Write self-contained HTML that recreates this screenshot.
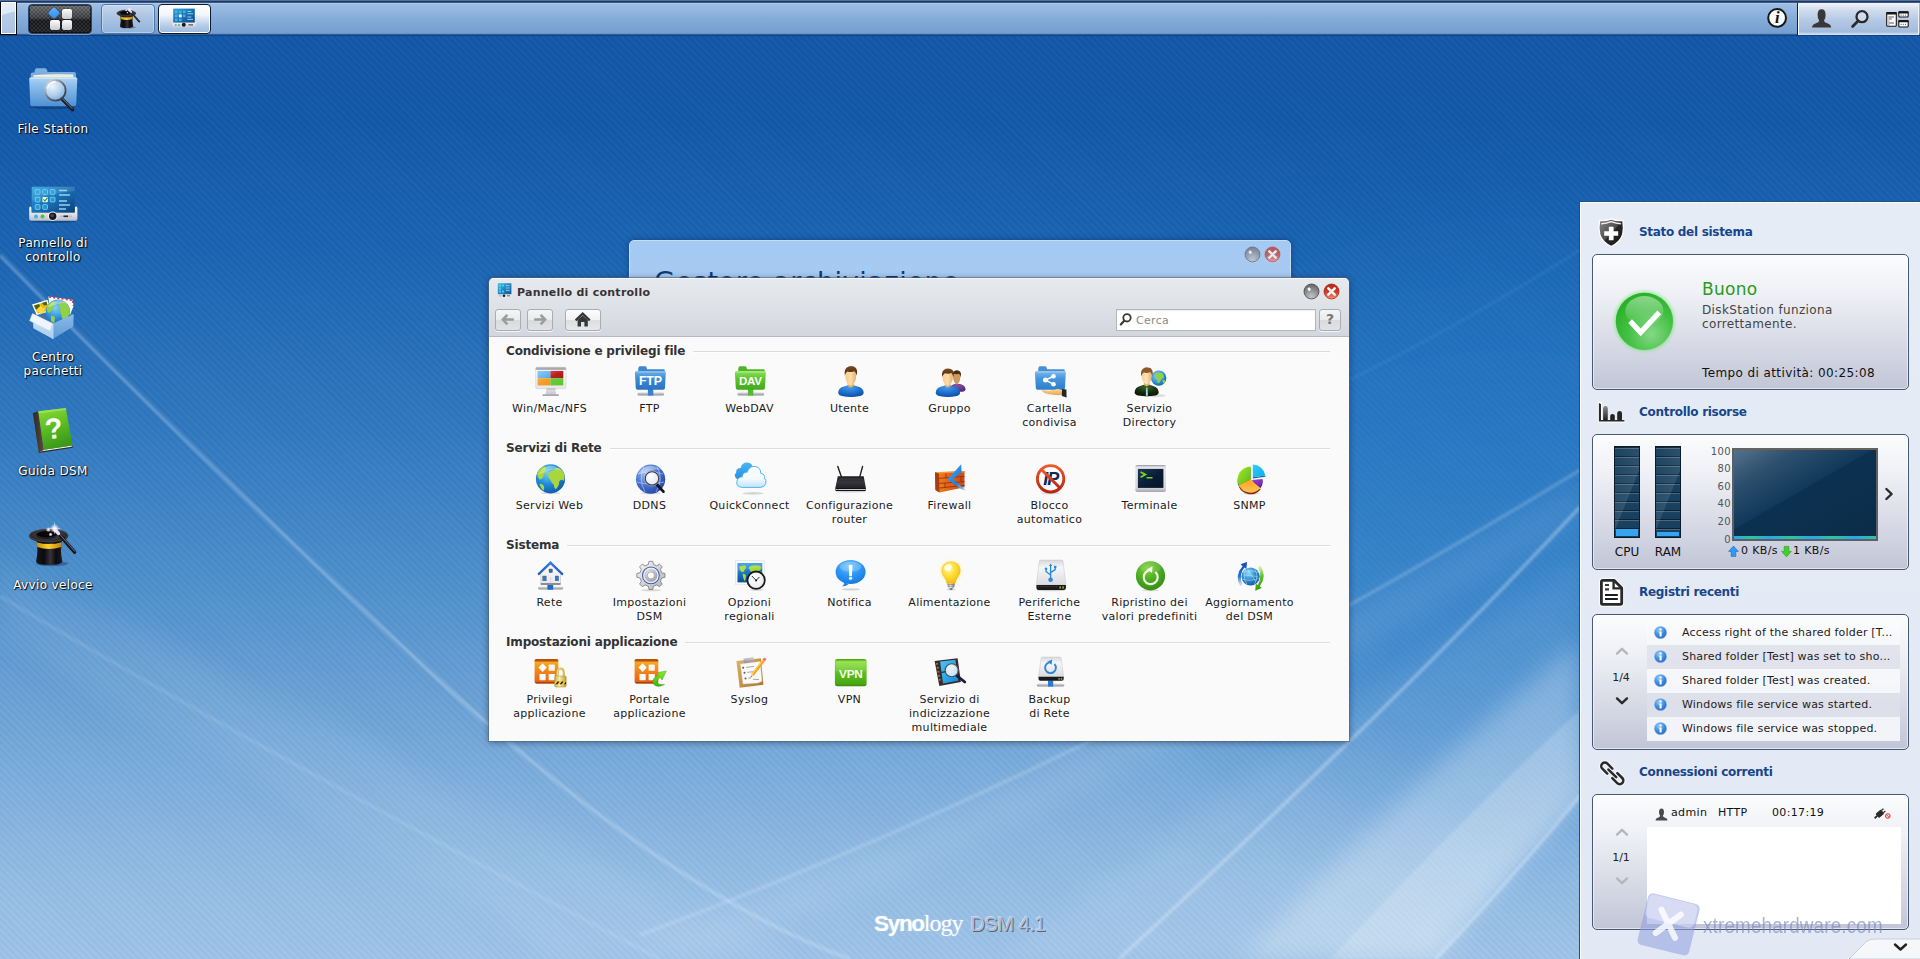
<!DOCTYPE html>
<html lang="it"><head><meta charset="utf-8"><title>Synology DiskStation</title>
<style>
*{box-sizing:border-box;margin:0;padding:0}
html,body{width:1920px;height:959px;overflow:hidden}
body{position:relative;font-family:"DejaVu Sans","Liberation Sans",sans-serif;font-size:11px;color:#222;
 background:#1257a5}
.ic{display:block;overflow:visible}
#bg{position:absolute;left:0;top:0;width:1920px;height:959px;
 background:
  repeating-linear-gradient(45deg,rgba(255,255,255,.02) 0,rgba(255,255,255,.02) 2.5px,rgba(0,0,30,.022) 2.5px,rgba(0,0,30,.022) 5px),
  linear-gradient(180deg,#1257a7 0,#1259a9 120px,#1c65b3 260px,#3079c0 430px,#4e90cc 580px,#74a8d9 740px,#94bde5 880px,#9fc4e8 959px)}
#bg svg{position:absolute;left:0;top:0}
/* ---------- taskbar ---------- */
#tb{position:absolute;left:0;top:0;width:1920px;height:36px;
 background:linear-gradient(180deg,#7f9cc4 0,#1c3763 1.2px,#1f3d6d 2.4px,#c3d8ef 3px,#9dbfe6 4px,#86acd9 18px,#759fd0 33px,#5c86bc 34px,#0d3a77 35px,#0f4a95 36px)}
#tb .sd{position:absolute;left:0;top:2px;width:17px;height:33px;border:1px solid #06080c;border-top:0;background:#fff;padding:1px}
#tb .sd i{display:block;width:100%;height:100%;background:linear-gradient(165deg,#e8eef8 0,#dfe8f5 35%,#b9cde8 36%,#a9c2e2 100%)}
.tbtn{position:absolute;top:4px;height:30px;border-radius:4px}
#mm{left:28px;width:64px;border:1px solid #2b4468;
 background:
 repeating-conic-gradient(rgba(255,255,255,.10) 0 25%,rgba(0,0,0,.10) 0 50%) 0 0/4px 4px,
 linear-gradient(180deg,#6a6c70 0,#3c3e42 45%,#16171a 55%,#1d1e21 100%);
 box-shadow:inset 0 0 0 1px rgba(0,0,0,.55),0 1px 0 rgba(255,255,255,.35)}
#mm b{position:absolute;width:10px;height:10px;border-radius:2px;background:linear-gradient(180deg,#fdfdfd,#c9cbce);box-shadow:0 0 1px #000}
#t1{left:101px;width:54px;border:1px solid #4f76ab;background:linear-gradient(180deg,#c3d5ec 0,#a8c2e2 50%,#93b3da 100%);box-shadow:inset 0 0 0 1px rgba(255,255,255,.35)}
#t2{left:157.5px;width:53.5px;border:1px solid #0c1a33;background:linear-gradient(180deg,#ffffff 0,#f2f6fb 35%,#b4cae6 75%,#9dbadf 100%);box-shadow:inset 0 0 0 1px #fff}
#tray{position:absolute;left:1797px;top:3px;width:122px;height:32px;border-left:1px solid #10213f;
 background:linear-gradient(180deg,#f3f6fb 0,#d3deee 20%,#b4c8e4 55%,#a2bbdc 90%,#dfe8f4 100%);box-shadow:inset 1px 0 0 #f4f7fc,inset -1px 0 0 #eef3fa}
#tb .ti{position:absolute}
/* ---------- desktop icons ---------- */
.dk{position:absolute;left:2px;width:100px;text-align:center}
.dk .ic{margin:0 auto}
.dl{position:relative;left:1px;margin-top:9px;font-size:12px;line-height:14px;color:#fff;letter-spacing:.35px;text-shadow:1px 1px 1px #000,0 0 2px rgba(0,0,0,.7)}
/* ---------- windows ---------- */
#w0{position:absolute;left:629px;top:240px;width:662px;height:60px;border-radius:5px 5px 0 0;background:linear-gradient(180deg,#a4c9f3,#a9cbf1);border:1px solid #c4dcf6;box-shadow:0 0 6px rgba(0,0,40,.35)}
#w0 .tt{position:absolute;left:24px;top:25px;font-size:27px;color:#0e3a78;white-space:nowrap;letter-spacing:.6px}
#w1{position:absolute;left:489px;top:278px;width:860px;height:463px;border-radius:5px 5px 0 0;background:#fafafa;box-shadow:0 0 0 1px rgba(90,100,115,.55),0 1px 7px rgba(0,0,30,.45);overflow:hidden}
#w1 .hd{position:absolute;left:0;top:0;width:860px;height:59px;background:linear-gradient(180deg,#e6e9ed 0,#dfe3e8 45%,#d3d7dd 100%);border-bottom:1px solid #b5b9c0;box-shadow:inset 0 1px 0 #f4f5f7}
#w1 .ttl{position:absolute;left:28px;top:8px;font-weight:bold;font-size:11px;line-height:14px;color:#3a3236;letter-spacing:.25px;white-space:nowrap}
.wb{position:absolute;width:17px;height:17px;border-radius:50%}
.nb{position:absolute;top:31px;height:22px;overflow:hidden;border:1px solid #a9adb4;border-radius:3px;background:linear-gradient(180deg,#fdfdfd 0,#f0f1f3 50%,#dcdee2 52%,#e6e8eb 100%);box-shadow:0 1px 0 rgba(255,255,255,.7)}
.nb.dis{background:linear-gradient(180deg,#f4f5f6 0,#e9ebed 50%,#d9dbdf 52%,#e0e2e5 100%)}
#sb{position:absolute;left:627px;top:31px;width:200px;height:22px;border:1px solid #b3b7be;background:#fff;box-shadow:inset 0 1px 1px rgba(0,0,0,.08)}
#sb span{position:absolute;left:19px;top:4px;font-size:11px;line-height:14px;color:#8a8a8a;letter-spacing:.3px}
#ct{position:absolute;left:0;top:59px;width:860px;height:404px}
.sec{position:absolute;left:17px;width:824px;height:16px;white-space:nowrap;display:flex;align-items:center}
.sec span{font-weight:bold;font-size:12px;line-height:16px;color:#333;letter-spacing:-.17px}
.sec i{flex:1;height:1px;background:#dcdcdc;margin-left:8px;margin-top:1px;box-shadow:0 1px 0 #fff}
.it{position:absolute;width:100px;text-align:center}
.it .ic{margin:0 auto}
.lb{margin-top:5px;font-size:11px;line-height:14px;color:#1a1a1a;letter-spacing:.3px;white-space:nowrap}
/* ---------- widget panel ---------- */
#wp{position:absolute;left:1579px;top:201px;width:341px;height:758px;border-left:1px solid #1d4f8e;border-top:1px solid #1d4f8e;
 background:linear-gradient(180deg,#e6ecf6 0,#e3e9f4 100%);box-shadow:inset 1px 1px 0 #fbfcfe}
.wh{position:absolute;left:59px;margin-top:.5px;font-weight:bold;font-size:12px;line-height:16px;color:#17468b;letter-spacing:-.3px;white-space:nowrap}
.wx{position:absolute;left:12px;width:317px;height:136px;border:1px solid #465872;border-radius:5px;
 background:linear-gradient(180deg,#fbfcfd 0,#eef0f5 30%,#d5d8e4 70%,#c2c5d6 100%);box-shadow:inset 0 0 0 1px rgba(255,255,255,.55)}
.wx .t{position:absolute;white-space:nowrap}
.row{position:absolute;left:54px;width:253px;height:24px}
.row span{position:absolute;left:35px;top:5px;line-height:14px;font-size:11px;letter-spacing:.2px;color:#1c1c1c;white-space:nowrap}
.pg{position:absolute;left:8px;width:40px;text-align:center;font-size:11px;line-height:14px;color:#222}
#logo{position:absolute;left:874px;top:909px;white-space:nowrap;line-height:28px}
.bar{position:absolute;top:11px;width:26px;height:92px;border:1px solid #0a1c2c;
 background:
  linear-gradient(112deg,rgba(255,255,255,.0) 0,rgba(255,255,255,.10) 55%,rgba(255,255,255,0) 56%),
  repeating-linear-gradient(180deg,#0b2236 0,#0b2236 1px,#4a6780 1px,#4a6780 2px,#1b4260 2px,#17405e 9px)}
.bar u{position:absolute;left:1px;right:1px;bottom:1px;background:#35a5f2;display:block}
.yl{position:absolute;left:110px;width:28px;text-align:right;font-size:10px;line-height:12px;color:#555;letter-spacing:.4px}
#gr{position:absolute;left:139px;top:13px;width:146px;height:93px;border:2px solid #5c6066;border-top-color:#6a6258;background:linear-gradient(150deg,#54728c 0,#2c4f6d 22%,#12395a 46%,#0c3150 47%,#0a2c48 100%)}
#gr i{position:absolute;left:0;right:0;bottom:0;height:3px;background:linear-gradient(90deg,#2aa6e8,#2fc39a 12%,#2aa6e8 25%,#2fc39a 40%,#2aa6e8 55%,#2fc39a 70%,#2aa6e8 85%,#2fc39a)}
.row .ic{position:absolute;left:7px;top:5px}
#wm{position:absolute;left:1634px;top:886px;width:260px;height:70px}
#wm .wt{position:absolute;left:69px;top:25px;font-family:"Liberation Sans",sans-serif;font-size:22px;line-height:30px;letter-spacing:.2px;color:rgba(120,132,190,.62);white-space:nowrap;transform:scaleX(.855);transform-origin:0 0}
#logo .s1{font-family:"Liberation Sans",sans-serif;font-weight:bold;font-size:22.5px;color:#fff;letter-spacing:-1.3px;text-shadow:0 0 2px rgba(255,255,255,.4)}
#logo .s2{font-family:"Liberation Serif",serif;font-size:24px;color:#fff;letter-spacing:-1px;text-shadow:0 0 2px rgba(255,255,255,.4)}
#logo .s3{font-family:"Liberation Sans",sans-serif;font-size:20px;color:#b2bdd0;margin-left:8px;letter-spacing:-.4px;text-shadow:1px 1px 0 rgba(70,84,110,.85),-1px -1px 0 rgba(255,255,255,.45)}

</style></head>
<body>
<div id="bg">
<svg width="1920" height="959" viewBox="0 0 1920 959">
<defs>
<filter id="bl1" filterUnits="userSpaceOnUse" x="-200" y="-200" width="2400" height="1400"><feGaussianBlur stdDeviation="1.5"/></filter>
<filter id="bl2" filterUnits="userSpaceOnUse" x="-200" y="-200" width="2400" height="1400"><feGaussianBlur stdDeviation="12"/></filter>
<filter id="bl3" filterUnits="userSpaceOnUse" x="-400" y="-400" width="2800" height="1800"><feGaussianBlur stdDeviation="70"/></filter>
</defs>
<!-- broad tints -->
<ellipse cx="1500" cy="540" rx="330" ry="260" fill="#1b76c8" opacity=".4" filter="url(#bl3)"/>
<!-- broad beams -->
<path d="M1240 959 Q1400 790 1580 640 L1580 800 Q1500 880 1436 959Z" fill="#fff" opacity=".3" filter="url(#bl2)"/><path d="M1330 959 Q1460 820 1580 710 L1580 796 Q1500 880 1436 959Z" fill="#fff" opacity=".16" filter="url(#bl1)"/>
<path d="M1000 959 Q1300 730 1580 560 L1580 640 Q1400 790 1240 959Z" fill="#fff" opacity=".07" filter="url(#bl2)"/>
<path d="M640 940 Q1100 770 1580 480 L1580 520 Q1100 810 700 959Z" fill="#fff" opacity=".08" filter="url(#bl2)"/>
<path d="M0 560 Q400 760 800 959 L560 959 Q300 800 0 640Z" fill="#fff" opacity=".06" filter="url(#bl2)"/>
<!-- thin lines -->
<path d="M0 255 Q190 450 430 672 T850 959" fill="none" stroke="#d4e6fa" stroke-width="2.400" opacity=".5" filter="url(#bl1)"/>
<path d="M0 596 Q240 740 660 959" fill="none" stroke="#e0eefc" stroke-width="2" opacity=".25" filter="url(#bl1)"/>
<path d="M640 935 Q1100 765 1580 470" fill="none" stroke="#e6f1fd" stroke-width="2.400" opacity=".3" filter="url(#bl1)"/>
<path d="M1350 380 Q1470 320 1580 250" fill="none" stroke="#cfe2f8" stroke-width="1.600" opacity=".13" filter="url(#bl1)"/>
<path d="M1119 959 Q1400 700 1580 507" fill="none" stroke="#eaf3fe" stroke-width="3" opacity=".42" filter="url(#bl1)"/>
<path d="M1436 959 Q1510 880 1580 796" fill="none" stroke="#eef5fe" stroke-width="3" opacity=".45" filter="url(#bl1)"/>
</svg>
</div>

<!-- taskbar -->
<div id="tb">
 <div class="sd"><i></i></div>
 <div id="mm" class="tbtn">
  <b style="left:20px;top:3px;transform:rotate(45deg) scale(.86);background:linear-gradient(135deg,#5db2ff,#2f8cf0);border-radius:1.5px"></b>
  <b style="left:33px;top:3.5px"></b><b style="left:21px;top:15px"></b><b style="left:33px;top:15px"></b>
 </div>
 <div id="t1" class="tbtn"><div style="position:absolute;left:13.5px;top:.8px"><svg class="ic" width="24" height="24" viewBox="0 0 24 24" style=""><defs>
<linearGradient id="wizard24_c" x1="0" y1="0" x2="1" y2="0"><stop offset="0" stop-color="#1a1a1c"/><stop offset=".3" stop-color="#0a0a0c"/><stop offset=".55" stop-color="#34343a"/><stop offset=".75" stop-color="#0c0c0e"/><stop offset="1" stop-color="#1c1c20"/></linearGradient>
<linearGradient id="wizard24_y" x1="0" y1="0" x2="1" y2="0"><stop offset="0" stop-color="#c98a08"/><stop offset=".45" stop-color="#ffcf2e"/><stop offset="1" stop-color="#c58306"/></linearGradient>
<radialGradient id="wizard24_b" cx=".5" cy=".4" r=".6"><stop offset="0" stop-color="#55555c"/><stop offset="1" stop-color="#1d1d21"/></radialGradient>
<radialGradient id="wizard24_sp" cx=".5" cy=".5" r=".5"><stop offset="0" stop-color="#fff"/><stop offset=".4" stop-color="#f0e4ff" stop-opacity=".8"/><stop offset="1" stop-color="#fff" stop-opacity="0"/></radialGradient>
</defs><g transform="scale(.5)">
<ellipse cx="24" cy="42.6" rx="16" ry="2.6" fill="#06204a" opacity=".35"/>
<path d="M8.4 19 Q10.6 30 8 40.5 Q8.6 44 21.2 44 Q33.8 44 34.4 40.5 Q31.8 30 34 19Z" fill="url(#wizard24_c)"/>
<path d="M8.6 21.2 Q21 25 33.8 21.2 L33.2 26 Q21 30 9.3 26Z" fill="url(#wizard24_y)"/>
<ellipse cx="20.7" cy="14.7" rx="19.6" ry="7" fill="url(#wizard24_b)"/>
<ellipse cx="20.7" cy="14.2" rx="19.2" ry="6.4" fill="none" stroke="#6a6a72" stroke-width=".6" opacity=".7"/>
<ellipse cx="18.6" cy="14" rx="10.5" ry="3.9" fill="#050506"/>
<path d="M8.5 14.6 Q18 19.5 29 14.6" fill="none" stroke="#3a3a40" stroke-width=".7"/>
<path d="M28.4 10.4 L46.6 31.2" stroke="#15151a" stroke-width="3.4" stroke-linecap="round"/>
<path d="M29.6 10.8 L46.8 30.4" stroke="#7a7a86" stroke-width=".9" stroke-linecap="round"/>
<path d="M26.4 8 L30.4 12.4" stroke="#e8dcff" stroke-width="3.6" stroke-linecap="round"/>
<circle cx="26.6" cy="7.4" r="4.6" fill="url(#wizard24_sp)"/>
<circle cx="20.4" cy="8.6" r="2.6" fill="url(#wizard24_sp)"/><circle cx="22.6" cy="13.4" r="2.2" fill="url(#wizard24_sp)"/>
<path d="M26.6 1.6v11.6M20.8 7.4h11.6" stroke="#fff" stroke-width=".6" opacity=".8"/>
</g></svg></div></div>
 <div id="t2" class="tbtn"><div style="position:absolute;left:13.6px;top:3px"><svg class="ic" width="24" height="24" viewBox="0 0 24 24" style=""><defs>
<linearGradient id="cp24_s" x1="0" y1="0" x2="1" y2="1"><stop offset="0" stop-color="#2fa3de"/><stop offset=".5" stop-color="#1a6fb5"/><stop offset="1" stop-color="#0d4f8a"/></linearGradient>
<linearGradient id="cp24_b" x1="0" y1="0" x2="0" y2="1"><stop offset="0" stop-color="#fafafc"/><stop offset="1" stop-color="#c4c6d0"/></linearGradient>
</defs>
<path d="M.4 14 H23.600 V18.400 Q23.600 19.600 22.400 19.600 H1.600 Q.4 19.600 .4 18.400Z" fill="url(#cp24_b)"/>
<rect x="1.200" y=".6" width="21.600" height="14" fill="url(#cp24_s)"/>
<g fill="#4cc4f0" opacity=".75"><rect x="3" y="2.600" width="2.600" height="2.600"/><rect x="7" y="2.600" width="2.600" height="2.600"/><rect x="11" y="2.600" width="2.600" height="2.600"/><rect x="3" y="6.600" width="2.600" height="2.600"/><rect x="11" y="6.600" width="2.600" height="2.600"/><rect x="3" y="10.600" width="2.600" height="2.600"/><rect x="7" y="10.600" width="2.600" height="2.600"/></g>
<rect x="6.800" y="6.400" width="3" height="3" fill="#f4fbf4"/>
<g stroke="#a6dcf4" stroke-width=".9"><path d="M15.400 3.400h4M15.400 5.800h5.600M15.400 9h4M15.400 11.400h5.600"/></g>
<circle cx="3.800" cy="16.900" r="1" fill="#3bb4ec"/><circle cx="7" cy="16.900" r="1" fill="#4dc041"/>
<circle cx="11.800" cy="16.700" r="2" fill="#1a1a1e"/>
<path d="M16.400 16.900h4.600" stroke="#33333a" stroke-width="1"/>
</svg></div></div>
 <div class="ti" style="left:1765px;top:6px"><svg class="ic" width="24" height="24" viewBox="0 0 24 24" style=""><circle cx="12.100" cy="11.900" r="8.900" fill="#fbfbfb" stroke="#161616" stroke-width="2"/>
<text x="12.300" y="17.400" text-anchor="middle" font-family="Liberation Serif, serif" font-weight="bold" font-style="italic" font-size="16.500" fill="#111">i</text>
</svg></div>
 <div id="tray"></div>
 <div class="ti" style="left:1809px;top:6px"><svg class="ic" width="24" height="24" viewBox="0 0 24 24" style=""><path d="M3 21.500 Q3.400 18.200 7 17.200 Q10 16.400 10.200 14.400 Q8.400 12 8.600 8.400 Q8.800 3.200 12.600 3.200 Q16.400 3.200 16.600 8.400 Q16.800 12 15 14.400 Q15.200 16.400 18.200 17.200 Q21.800 18.200 22.200 21.500Z" fill="#383838"/>
</svg></div>
 <div class="ti" style="left:1848px;top:6px"><svg class="ic" width="24" height="24" viewBox="0 0 24 24" style=""><circle cx="14" cy="10.700" r="5.500" fill="#dce6f4" fill-opacity=".55" stroke="#2a2a2a" stroke-width="2.300"/>
<path d="M10 15 L4.600 20.400" stroke="#2a2a2a" stroke-width="2.800" stroke-linecap="round"/>
</svg></div>
 <div class="ti" style="left:1885px;top:6px"><svg class="ic" width="24" height="24" viewBox="0 0 24 24" style=""><rect x="1.700" y="6.600" width="9.600" height="13.600" rx="1" fill="#fdfdfd" stroke="#161616" stroke-width="1.100"/>
<rect x="1.200" y="6.100" width="10.600" height="2.400" rx="1" fill="#161616"/>
<path d="M3.400 11h5.600M3.400 13h3.400M3.400 15.200h.9M3.400 17h5.600M3.400 18.800h.9" stroke="#333" stroke-width=".8"/>
<rect x="13.800" y="5.700" width="9.400" height="5.300" rx="1" fill="#fdfdfd" stroke="#161616" stroke-width="1.100"/>
<rect x="13.300" y="5.200" width="10.400" height="2.200" rx="1" fill="#161616"/>
<path d="M15.600 9.200h1M17.800 9.200h1M20 9.200h1" stroke="#333" stroke-width=".8"/>
<rect x="13.800" y="14.500" width="9.400" height="6.500" rx="1" fill="#fdfdfd" stroke="#161616" stroke-width="1.100"/>
<rect x="13.300" y="14" width="10.400" height="2.200" rx="1" fill="#161616"/>
<path d="M15.600 18.400h1M17.800 18.400h1M20 18.400h1" stroke="#333" stroke-width=".8"/>
</svg></div>
</div>

<!-- desktop icons -->
<div class="dk" style="top:65px"><svg class="ic" width="48" height="48" viewBox="0 0 48 48" style=""><defs>
<linearGradient id="filestation_f" x1="0" y1="0" x2="0" y2="1"><stop offset="0" stop-color="#b3d6f3"/><stop offset=".25" stop-color="#8fc1ec"/><stop offset="1" stop-color="#4f90d3"/></linearGradient>
<linearGradient id="filestation_b" x1="0" y1="0" x2="0" y2="1"><stop offset="0" stop-color="#7fb2e2"/><stop offset="1" stop-color="#5c98d4"/></linearGradient>
<radialGradient id="filestation_l" cx=".35" cy=".3" r=".8"><stop offset="0" stop-color="#f4f9ff" stop-opacity=".95"/><stop offset=".55" stop-color="#c4dcf2" stop-opacity=".75"/><stop offset="1" stop-color="#7fb0df" stop-opacity=".6"/></radialGradient>
<linearGradient id="filestation_r" x1="0" y1="0" x2="1" y2="1"><stop offset="0" stop-color="#f2f2f2"/><stop offset=".5" stop-color="#6b6b73"/><stop offset="1" stop-color="#2a2a33"/></linearGradient>
</defs>
<ellipse cx="25" cy="42" rx="23" ry="2" fill="#04244d" opacity=".35"/>
<path d="M6.5 7.5 Q6.5 3.2 9 3.2 L17 3.2 Q18.6 3.2 19 5 L19.6 7 L46 7 Q48 7 48 9 L48 38 L2.8 38 L2.8 9 Q2.8 7.5 4.5 7.5Z" fill="url(#filestation_b)"/>
<path d="M5.5 10.2 Q25 8.6 45 9.6 L46 14 L5 14Z" fill="#fbf8e4"/>
<path d="M5.8 11.6 Q25 10.2 45.4 11.2" fill="none" stroke="#d9d5b8" stroke-width=".6"/>
<path d="M1.2 14 Q1.2 12.2 3 12.2 L47.6 12.2 Q49.4 12.2 49.3 14 L48.2 39.5 Q48.1 41.3 46.3 41.3 L4.2 41.3 Q2.4 41.3 2.3 39.5Z" fill="url(#filestation_f)"/>
<path d="M1.8 13.4 L48.8 13.4" stroke="#d6eafa" stroke-width=".9" opacity=".9"/>
<path d="M33.6 33.6 L44.6 44.8" stroke="#1b1b22" stroke-width="3.4" stroke-linecap="round"/>
<path d="M34 33.2 L44 43.4" stroke="#8a8a96" stroke-width=".9" stroke-linecap="round"/>
<circle cx="27.4" cy="25.4" r="10.2" fill="url(#filestation_l)"/>
<circle cx="27.4" cy="25.4" r="10.2" fill="none" stroke="url(#filestation_r)" stroke-width="1.7"/>
<path d="M19.5 23 Q21 17.5 27 16.6" fill="none" stroke="#fff" stroke-width="1.6" stroke-linecap="round" opacity=".85"/>
</svg><div class="dl">File Station</div></div>
<div class="dk" style="top:179px"><svg class="ic" width="48" height="48" viewBox="0 0 48 48" style=""><defs>
<linearGradient id="controlpanel_s" x1="0" y1="0" x2="1" y2="1"><stop offset="0" stop-color="#2fa3de"/><stop offset=".5" stop-color="#1a6fb5"/><stop offset="1" stop-color="#0d3f7a"/></linearGradient>
<linearGradient id="controlpanel_b" x1="0" y1="0" x2="0" y2="1"><stop offset="0" stop-color="#fafafc"/><stop offset=".6" stop-color="#dcdde4"/><stop offset="1" stop-color="#b9bbc6"/></linearGradient>
</defs>
<ellipse cx="25" cy="42.3" rx="23" ry="1.6" fill="#04244d" opacity=".35"/>
<path d="M1.2 29.5 Q1.2 27.6 2.4 27.6 Q3.6 27.6 3.6 29.5 L3.6 33 L46.8 33 L46.8 29.5 Q46.8 27.6 48 27.6 Q49.4 27.6 49.4 29.5 L49.4 39.8 Q49.4 41.8 47.4 41.8 L3.2 41.8 Q1.2 41.8 1.2 39.8Z" fill="url(#controlpanel_b)"/>
<rect x="3.7" y="7.7" width="43" height="26" fill="url(#controlpanel_s)"/>
<path d="M3.7 7.7 H46.7 V12 Q25 14 3.7 22Z" fill="#fff" opacity=".10"/>
<g fill="#35b4e6" fill-opacity=".55" stroke="#7fd8f5" stroke-width=".8">
<rect x="7.2" y="10.6" width="4.8" height="4.8" rx=".8"/><rect x="14.7" y="10.6" width="4.8" height="4.8" rx=".8"/><rect x="22.2" y="10.6" width="4.8" height="4.8" rx=".8"/>
<rect x="7.2" y="18.2" width="4.8" height="4.8" rx=".8"/><rect x="22.2" y="18.2" width="4.8" height="4.8" rx=".8"/>
<rect x="7.2" y="25.6" width="4.8" height="4.8" rx=".8"/><rect x="14.7" y="25.6" width="4.8" height="4.8" rx=".8"/>
</g>
<rect x="14.4" y="17.9" width="5.4" height="5.4" rx="1" fill="#f4fbf4"/>
<path d="M15.4 20.4 l1.5 1.7 l2.4-3.2" fill="none" stroke="#2b9a3a" stroke-width="1.2"/>
<g stroke="#a6dcf4" stroke-width="1.3" opacity=".9"><path d="M31 11.5h8M31 16h11M31 22h8M31 26h11M31 30h7"/></g>
<circle cx="8" cy="37.6" r="2" fill="#3bb4ec"/><circle cx="14.5" cy="37.6" r="2" fill="#4dc041"/>
<circle cx="24.7" cy="37.2" r="4.6" fill="#f4f4f7"/>
<circle cx="24.7" cy="37.2" r="3.7" fill="#1a1a1e"/><circle cx="24.2" cy="36.6" r="1.6" fill="#4a4a52"/>
<path d="M32 37.3h12" stroke="#b9bbc4" stroke-width="1.4"/><path d="M35.5 37.3h4.5" stroke="#26262c" stroke-width="1.6"/>
</svg><div class="dl">Pannello di<br>controllo</div></div>
<div class="dk" style="top:293px"><svg class="ic" width="48" height="48" viewBox="0 0 48 48" style=""><defs>
<radialGradient id="package_g" cx=".4" cy=".35" r=".75"><stop offset="0" stop-color="#7fd0f4"/><stop offset=".6" stop-color="#2b8bd8"/><stop offset="1" stop-color="#145aa6"/></radialGradient>
<linearGradient id="package_l" x1="0" y1="0" x2="0" y2="1"><stop offset="0" stop-color="#cfe4f7"/><stop offset="1" stop-color="#a9cdee"/></linearGradient>
<linearGradient id="package_r" x1="0" y1="0" x2="0" y2="1"><stop offset="0" stop-color="#8bbbe8"/><stop offset="1" stop-color="#5f9ad6"/></linearGradient>
<clipPath id="package_c"><circle cx="29.9" cy="18.5" r="12"/></clipPath>
</defs>
<path d="M5 21 L25 12 L45.7 21 L25 30.6Z" fill="#3c73b0"/>
<path d="M20.3 3.5 L44.5 6.8 L45.6 13 L42 22 L22 17Z" fill="#fbfbfd"/>
<path d="M21 4 L44 7.2" stroke="#d8323c" stroke-width="1.6" stroke-dasharray="2 2.2"/>
<path d="M44.6 8 L45.4 13" stroke="#d8323c" stroke-width="1.4" stroke-dasharray="2 2"/>
<path d="M4 11.4 L19.5 6.8 L22.5 18 L8.7 22Z" fill="#fdfdfd"/>
<path d="M5.6 12.4 L18.6 8.4 L21 17.4 L9.6 20.6Z" fill="#f5b414"/>
<path d="M6 12.6 L11 11 L12.5 14 L8 16.5Z M14 10 L18.4 8.6 L19.4 12 L16 12.4Z" fill="#3d6a1e"/>
<path d="M10 15 l3-2.5 l1.2 2.8 l3-.6 l-1.2 3 l2 1.6 l-4 .6 l-1.4 1.6 l-1-2.6 l-3-.4z" fill="#ffd83c"/>
<circle cx="29.9" cy="18.5" r="12" fill="url(#package_g)"/>
<g clip-path="url(#package_c)" fill="#8fd14a">
<path d="M19 12 Q22 8 27 8.5 Q28 11 25.5 13 Q26 16 23 18 Q21 21 19.5 19 Q18 15 19 12Z"/>
<path d="M31 10 Q36 7.5 40 11 Q43 15 42 20 Q40 25 36 26.5 Q33 26 33.5 22 Q31 19 32.5 16 Q30 13 31 10Z"/>
<path d="M23 23 Q26 22 27 25 Q27 29 25 31 Q22 28 23 23Z"/>
</g>
<path d="M19.5 14 Q24 7.5 31 7 Q36 7 39.5 10.5 Q33 9 27 12 Q22 14.5 19.5 14Z" fill="#fff" opacity=".35"/>
<path d="M4.9 21 L24.9 30.6 L24.9 46 L5.3 35.2Z" fill="url(#package_l)"/>
<path d="M24.9 30.6 L45.7 21 L45.3 33.5 L24.9 46Z" fill="url(#package_r)"/>
<path d="M1.6 27.7 L4.5 20.6 L24.4 30.6 L22 37.7Z" fill="#eef5fc"/>
<path d="M1.6 27.7 L4.5 20.6 L24.4 30.6 L22 37.7Z" fill="none" stroke="#cfe0f2" stroke-width=".5"/>
<path d="M24.9 30.6 L24.9 46" stroke="#e4f0fb" stroke-width=".7"/>
</svg><div class="dl">Centro<br>pacchetti</div></div>
<div class="dk" style="top:407px"><svg class="ic" width="48" height="48" viewBox="0 0 48 48" style=""><defs>
<linearGradient id="help_g" x1="0" y1="0" x2=".3" y2="1"><stop offset="0" stop-color="#8fdc3a"/><stop offset=".5" stop-color="#5cbf24"/><stop offset="1" stop-color="#3b9a18"/></linearGradient>
<linearGradient id="help_s" x1="0" y1="0" x2="1" y2="0"><stop offset="0" stop-color="#2e2622"/><stop offset="1" stop-color="#5e4a40"/></linearGradient>
</defs>
<path d="M10.9 46 L44.6 40.8 L44.3 38.6 L10.7 44Z" fill="#2a2a26"/>
<path d="M10.7 44.7 L43.9 39.7 L43.7 38.4 L15.7 42.7Z" fill="#eef0ea"/>
<path d="M4.9 6 L10.3 4.3 L15.9 42.9 L10.7 45.2Z" fill="url(#help_s)"/>
<path d="M10.3 4.3 L37.8 1 L44.5 38.5 L15.7 42.7Z" fill="url(#help_g)"/>
<path d="M10.3 4.3 L37.8 1 L38.2 3 L10.7 6.5Z" fill="#b6f06a" opacity=".5"/>
<g transform="rotate(-7 26 22)"><text x="26" y="31.5" text-anchor="middle" font-family="Liberation Sans, sans-serif" font-weight="bold" font-size="29" fill="#fdfff8">?</text></g>
</svg><div class="dl">Guida DSM</div></div>
<div class="dk" style="top:521px"><svg class="ic" width="48" height="48" viewBox="0 0 48 48" style=""><defs>
<linearGradient id="wizard_c" x1="0" y1="0" x2="1" y2="0"><stop offset="0" stop-color="#1a1a1c"/><stop offset=".3" stop-color="#0a0a0c"/><stop offset=".55" stop-color="#34343a"/><stop offset=".75" stop-color="#0c0c0e"/><stop offset="1" stop-color="#1c1c20"/></linearGradient>
<linearGradient id="wizard_y" x1="0" y1="0" x2="1" y2="0"><stop offset="0" stop-color="#c98a08"/><stop offset=".45" stop-color="#ffcf2e"/><stop offset="1" stop-color="#c58306"/></linearGradient>
<radialGradient id="wizard_b" cx=".5" cy=".4" r=".6"><stop offset="0" stop-color="#55555c"/><stop offset="1" stop-color="#1d1d21"/></radialGradient>
<radialGradient id="wizard_sp" cx=".5" cy=".5" r=".5"><stop offset="0" stop-color="#fff"/><stop offset=".4" stop-color="#f0e4ff" stop-opacity=".8"/><stop offset="1" stop-color="#fff" stop-opacity="0"/></radialGradient>
</defs>
<ellipse cx="24" cy="42.6" rx="16" ry="2.6" fill="#06204a" opacity=".35"/>
<path d="M8.4 19 Q10.6 30 8 40.5 Q8.6 44 21.2 44 Q33.8 44 34.4 40.5 Q31.8 30 34 19Z" fill="url(#wizard_c)"/>
<path d="M8.6 21.2 Q21 25 33.8 21.2 L33.2 26 Q21 30 9.3 26Z" fill="url(#wizard_y)"/>
<ellipse cx="20.7" cy="14.7" rx="19.6" ry="7" fill="url(#wizard_b)"/>
<ellipse cx="20.7" cy="14.2" rx="19.2" ry="6.4" fill="none" stroke="#6a6a72" stroke-width=".6" opacity=".7"/>
<ellipse cx="18.6" cy="14" rx="10.5" ry="3.9" fill="#050506"/>
<path d="M8.5 14.6 Q18 19.5 29 14.6" fill="none" stroke="#3a3a40" stroke-width=".7"/>
<path d="M28.4 10.4 L46.6 31.2" stroke="#15151a" stroke-width="3.4" stroke-linecap="round"/>
<path d="M29.6 10.8 L46.8 30.4" stroke="#7a7a86" stroke-width=".9" stroke-linecap="round"/>
<path d="M26.4 8 L30.4 12.4" stroke="#e8dcff" stroke-width="3.6" stroke-linecap="round"/>
<circle cx="26.6" cy="7.4" r="4.6" fill="url(#wizard_sp)"/>
<circle cx="20.4" cy="8.6" r="2.6" fill="url(#wizard_sp)"/><circle cx="22.6" cy="13.4" r="2.2" fill="url(#wizard_sp)"/>
<path d="M26.6 1.6v11.6M20.8 7.4h11.6" stroke="#fff" stroke-width=".6" opacity=".8"/>
</svg><div class="dl">Avvio veloce</div></div>


<!-- back window -->
<div id="w0">
 <div class="tt">Gestore archiviazione</div>
 <div class="wb" style="left:614px;top:5px;opacity:.7"><svg class="ic" width="17" height="17" viewBox="0 0 17 17" style=""><defs>
<radialGradient id="wmin_g" cx=".5" cy=".85" r=".9"><stop offset="0" stop-color="#c4c6c8"/><stop offset=".5" stop-color="#8e9092"/><stop offset="1" stop-color="#5c5e60"/></radialGradient>
</defs>
<circle cx="8.500" cy="9" r="7.800" fill="#fff" opacity=".7"/>
<circle cx="8.500" cy="8.500" r="7.500" fill="url(#wmin_g)" stroke="#4c4e50" stroke-width=".9"/>
<ellipse cx="6.200" cy="6.200" rx="1.500" ry="1.800" fill="#fff" transform="rotate(-30 6.200 6.200)"/>
</svg></div>
 <div class="wb" style="left:634px;top:5px;opacity:.7"><svg class="ic" width="17" height="17" viewBox="0 0 17 17" style=""><defs>
<linearGradient id="wclose_g" x1="0" y1="0" x2="0" y2="1"><stop offset="0" stop-color="#b8261a"/><stop offset=".55" stop-color="#cc3c2c"/><stop offset="1" stop-color="#f8907c"/></linearGradient>
</defs>
<circle cx="8.500" cy="9" r="7.800" fill="#fff" opacity=".7"/>
<circle cx="8.500" cy="8.500" r="7.500" fill="url(#wclose_g)" stroke="#a82216" stroke-width=".8"/>
<path d="M5.300 5.300 L11.700 11.700 M11.700 5.300 L5.300 11.700" stroke="#fff6f4" stroke-width="2.500" stroke-linecap="round"/>
</svg></div>
</div>

<!-- control panel window -->
<div id="w1">
 <div class="hd">
  <div style="position:absolute;left:8px;top:5px"><svg class="ic" width="16" height="16" viewBox="0 0 16 16" style=""><defs><linearGradient id="cp16_s" x1="0" y1="0" x2="1" y2="1"><stop offset="0" stop-color="#3cc0e8"/><stop offset=".6" stop-color="#1f7ab8"/><stop offset="1" stop-color="#145a94"/></linearGradient></defs>
<path d="M0 10.600 H15 V14 Q15 14.800 14.200 14.800 H.8 Q0 14.800 0 14Z" fill="#e4e6ec"/>
<rect x=".8" y=".2" width="13.600" height="11" fill="url(#cp16_s)"/>
<g fill="#5ad8f4" opacity=".8"><rect x="2" y="1.600" width="2" height="2"/><rect x="5" y="1.600" width="2" height="2"/><rect x="2" y="4.600" width="2" height="2"/><rect x="2" y="7.600" width="2" height="2"/><rect x="5" y="7.600" width="2" height="2"/></g>
<g stroke="#9fe0f4" stroke-width=".8"><path d="M8.800 2.600h4M8.800 5h4M8.800 7.400h4"/></g>
<circle cx="7" cy="12.800" r="1.300" fill="#1a1a1e"/><circle cx="2.200" cy="12.800" r=".6" fill="#3bb4ec"/><circle cx="4" cy="12.800" r=".6" fill="#4dc041"/>
<path d="M10 12.800h3" stroke="#44444c" stroke-width=".8"/>
</svg></div>
  <div class="ttl">Pannello di controllo</div>
  <div class="wb" style="left:814px;top:5px"><svg class="ic" width="17" height="17" viewBox="0 0 17 17" style=""><defs>
<radialGradient id="wmin_g" cx=".5" cy=".85" r=".9"><stop offset="0" stop-color="#c4c6c8"/><stop offset=".5" stop-color="#8e9092"/><stop offset="1" stop-color="#5c5e60"/></radialGradient>
</defs>
<circle cx="8.500" cy="9" r="7.800" fill="#fff" opacity=".7"/>
<circle cx="8.500" cy="8.500" r="7.500" fill="url(#wmin_g)" stroke="#4c4e50" stroke-width=".9"/>
<ellipse cx="6.200" cy="6.200" rx="1.500" ry="1.800" fill="#fff" transform="rotate(-30 6.200 6.200)"/>
</svg></div>
  <div class="wb" style="left:834px;top:5px"><svg class="ic" width="17" height="17" viewBox="0 0 17 17" style=""><defs>
<linearGradient id="wclose_g" x1="0" y1="0" x2="0" y2="1"><stop offset="0" stop-color="#b8261a"/><stop offset=".55" stop-color="#cc3c2c"/><stop offset="1" stop-color="#f8907c"/></linearGradient>
</defs>
<circle cx="8.500" cy="9" r="7.800" fill="#fff" opacity=".7"/>
<circle cx="8.500" cy="8.500" r="7.500" fill="url(#wclose_g)" stroke="#a82216" stroke-width=".8"/>
<path d="M5.300 5.300 L11.700 11.700 M11.700 5.300 L5.300 11.700" stroke="#fff6f4" stroke-width="2.500" stroke-linecap="round"/>
</svg></div>
  <div class="nb dis" style="left:6px;width:26px"><svg class="ic" width="24" height="20" viewBox="0 0 24 20" style=""><path d="M11.400 4.800 L6.800 9.600 L11.400 14.400 M7.400 9.600 H17.800" fill="none" stroke="#9a9c9e" stroke-width="2.500" stroke-linejoin="miter"/>
</svg></div>
  <div class="nb dis" style="left:38px;width:26px"><svg class="ic" width="24" height="20" viewBox="0 0 24 20" style=""><path d="M12.600 4.800 L17.200 9.600 L12.600 14.400 M16.600 9.600 H6.200" fill="none" stroke="#9a9c9e" stroke-width="2.500" stroke-linejoin="miter"/>
</svg></div>
  <div class="nb" style="left:76px;width:36px"><svg class="ic" width="34" height="20" viewBox="0 0 34 20" style=""><path d="M9.600 10.400 L16.700 3.600 L23.800 10.400" fill="none" stroke="#343638" stroke-width="2.200" stroke-linejoin="miter"/>
<path d="M11.600 10 L16.700 5.400 L21.800 10 V16.400 H18.400 V12 H15 V16.400 H11.600Z" fill="#343638"/>
</svg></div>
  <div id="sb"><svg class="ic" width="16" height="20" viewBox="0 0 16 20" style=""><circle cx="10" cy="7.800" r="3.700" fill="#fff" stroke="#3a3a3a" stroke-width="1.800"/>
<path d="M7.200 10.800 L3.800 14.400" stroke="#3a3a3a" stroke-width="2.200" stroke-linecap="round"/>
</svg><span>Cerca</span></div>
  <div class="nb dis" style="left:830px;width:22px;text-align:center;font-weight:bold;font-size:14px;line-height:19px;color:#777">?</div>
 </div>
 <div id="ct">
<div class="sec" style="top:6px"><span>Condivisione e privilegi file</span><i></i></div>
<div class="it" style="left:10.5px;top:28px"><svg class="ic" width="32" height="32" viewBox="0 0 32 32" style=""><defs>
<linearGradient id="winmac_fr" x1="0" y1="0" x2="0" y2="1"><stop offset="0" stop-color="#9c9ca2"/><stop offset=".12" stop-color="#b4b4ba"/><stop offset=".13" stop-color="#fdfdfd"/><stop offset="1" stop-color="#e6e6ea"/></linearGradient>
<linearGradient id="winmac_st" x1="0" y1="0" x2="0" y2="1"><stop offset="0" stop-color="#8a8a90"/><stop offset=".3" stop-color="#dedee2"/><stop offset="1" stop-color="#c4c4ca"/></linearGradient>
<linearGradient id="winmac_gl" x1="0" y1="0" x2="1" y2="1"><stop offset="0" stop-color="#fff" stop-opacity=".45"/><stop offset=".5" stop-color="#fff" stop-opacity=".08"/><stop offset="1" stop-color="#fff" stop-opacity="0"/></linearGradient>
</defs>
<path d="M12.4 23 L21.4 23 L22 29.6 L11.8 29.6Z" fill="url(#winmac_st)"/>
<rect x="8.4" y="29.3" width="16.6" height="1.8" rx=".8" fill="#a6a6ac"/>
<rect x="1.7" y="2.2" width="30.3" height="21.4" rx="1.2" fill="url(#winmac_fr)" stroke="#c9c9ce" stroke-width=".5"/>
<rect x="3.6" y="5.9" width="12.8" height="7.3" fill="#3aa4ea"/><rect x="16.4" y="5.9" width="12.9" height="7.3" fill="#b40c0c"/>
<rect x="3.6" y="13.2" width="12.8" height="7.2" fill="#f2940e"/><rect x="16.4" y="13.2" width="12.9" height="7.2" fill="#5cc62c"/>
<rect x="3.6" y="5.9" width="25.7" height="14.5" fill="url(#winmac_gl)"/>
</svg><div class="lb">Win/Mac/NFS</div></div>
<div class="it" style="left:110.5px;top:28px"><svg class="ic" width="32" height="32" viewBox="0 0 32 32" style=""><defs>
<linearGradient id="ftp_f" x1="0" y1="0" x2="0" y2="1"><stop offset="0" stop-color="#6fb0e6"/><stop offset=".4" stop-color="#3c8bd6"/><stop offset="1" stop-color="#2a72c0"/></linearGradient>
<linearGradient id="ftp_p" x1="0" y1="0" x2="0" y2="1"><stop offset="0" stop-color="#e8e8ec"/><stop offset=".5" stop-color="#b8b8be"/><stop offset="1" stop-color="#8e8e96"/></linearGradient>
</defs>
<rect x="3.4" y="27.3" width="26.8" height="3.2" rx="1.6" fill="url(#ftp_p)"/>
<rect x="13.9" y="24" width="5.4" height="6.6" fill="#3a80cc"/>
<path d="M4.2 5 Q4.2 1.2 6 1.2 L11 1.2 Q12.2 1.2 12.6 2.6 L13.2 4.2 L29.4 4.2 Q30.8 4.2 30.8 5.6 L30.8 9 L4.2 9Z" fill="#3f86cf"/>
<path d="M.9 8 Q.9 6 2.8 6 L30 6 Q31.9 6 31.8 8 L31 23 Q30.9 24.8 29.2 24.8 L3.6 24.8 Q1.9 24.8 1.8 23Z" fill="url(#ftp_f)"/>
<path d="M1.6 7 L31.2 7" stroke="#a9d2f4" stroke-width=".8"/>
<text x="16.4" y="20" text-anchor="middle" font-family="Liberation Sans, sans-serif" font-weight="bold" font-size="12.4" fill="#fff" letter-spacing="-.2">FTP</text>
</svg><div class="lb">FTP</div></div>
<div class="it" style="left:210.5px;top:28px"><svg class="ic" width="32" height="32" viewBox="0 0 32 32" style=""><defs>
<linearGradient id="webdav_f" x1="0" y1="0" x2="0" y2="1"><stop offset="0" stop-color="#8fe05a"/><stop offset=".4" stop-color="#5cc632"/><stop offset="1" stop-color="#43a81e"/></linearGradient>
<linearGradient id="webdav_p" x1="0" y1="0" x2="0" y2="1"><stop offset="0" stop-color="#e8e8ec"/><stop offset=".5" stop-color="#b8b8be"/><stop offset="1" stop-color="#8e8e96"/></linearGradient>
</defs>
<rect x="3.4" y="27.3" width="26.8" height="3.2" rx="1.6" fill="url(#webdav_p)"/>
<rect x="13.9" y="24" width="5.4" height="6.6" fill="#55bb2c"/>
<path d="M4.2 5 Q4.2 1.2 6 1.2 L11 1.2 Q12.2 1.2 12.6 2.6 L13.2 4.2 L29.4 4.2 Q30.8 4.2 30.8 5.6 L30.8 9 L4.2 9Z" fill="#4fb52a"/>
<path d="M.9 8 Q.9 6 2.8 6 L30 6 Q31.9 6 31.8 8 L31 23 Q30.9 24.8 29.2 24.8 L3.6 24.8 Q1.9 24.8 1.8 23Z" fill="url(#webdav_f)"/>
<path d="M1.6 7 L31.2 7" stroke="#c4f2a0" stroke-width=".8"/>
<text x="16.4" y="20" text-anchor="middle" font-family="Liberation Sans, sans-serif" font-weight="bold" font-size="11.6" fill="#fff" letter-spacing="-.2">DAV</text>
</svg><div class="lb">WebDAV</div></div>
<div class="it" style="left:310.5px;top:28px"><svg class="ic" width="32" height="32" viewBox="0 0 32 32" style=""><defs>
<radialGradient id="user_b" cx=".45" cy=".2" r=".9"><stop offset="0" stop-color="#3f9cf0"/><stop offset=".55" stop-color="#1a6cc8"/><stop offset="1" stop-color="#0d4590"/></radialGradient>
<linearGradient id="user_s" x1="0" y1="0" x2="1" y2="0"><stop offset="0" stop-color="#f7c98a"/><stop offset=".5" stop-color="#fbdcaa"/><stop offset="1" stop-color="#e8ad68"/></linearGradient>
<linearGradient id="user_h" x1="0" y1="0" x2="0" y2="1"><stop offset="0" stop-color="#7a4a22"/><stop offset="1" stop-color="#4a280e"/></linearGradient>
</defs>
<path d="M4.2 27.5 Q4.4 22.6 10 21.4 L14 20.2 L19.4 20.2 L23.6 21.4 Q29.4 22.6 29.7 27.5 Q29.6 30 26 31 Q17 33.2 8 31 Q4.3 30 4.2 27.5Z" fill="url(#user_b)"/>
<path d="M13.6 17 L13.8 21 Q16.7 24 19.8 21 L20 17Z" fill="#e8a860"/>
<path d="M11.2 9.5 Q11 3.6 16.8 3.4 Q22.4 3.6 22.3 9.5 Q22.4 14 20.6 17.4 Q18.8 20.6 16.7 20.7 Q14.6 20.6 12.8 17.4 Q11 14 11.2 9.5Z" fill="url(#user_s)"/>
<path d="M10.8 10.6 Q9.6 3.6 14.6 1.6 Q19 .2 21.6 2.8 Q24 5 22.6 10.6 Q22.2 7.6 20.4 6.2 Q17.6 7.6 13.4 6.4 Q11.4 8 10.8 10.6Z" fill="url(#user_h)"/>
</svg><div class="lb">Utente</div></div>
<div class="it" style="left:410.5px;top:28px"><svg class="ic" width="32" height="32" viewBox="0 0 32 32" style=""><defs>
<radialGradient id="group_b" cx=".45" cy=".2" r=".9"><stop offset="0" stop-color="#3f9cf0"/><stop offset=".55" stop-color="#1a6cc8"/><stop offset="1" stop-color="#0d4590"/></radialGradient>
<radialGradient id="group_p" cx=".45" cy=".2" r=".9"><stop offset="0" stop-color="#8a4fa8"/><stop offset="1" stop-color="#4a2468"/></radialGradient>
<linearGradient id="group_s" x1="0" y1="0" x2="1" y2="0"><stop offset="0" stop-color="#f7c98a"/><stop offset=".5" stop-color="#fbdcaa"/><stop offset="1" stop-color="#e8ad68"/></linearGradient>
<linearGradient id="group_h" x1="0" y1="0" x2="0" y2="1"><stop offset="0" stop-color="#7a4a22"/><stop offset="1" stop-color="#4a280e"/></linearGradient>
</defs>
<path d="M16 23 Q17 19.6 21 19 L26 19 Q31 20 31.6 24 Q31.6 26.4 28 26.8 L18 27Z" fill="url(#group_p)"/>
<path d="M18.6 11 Q18.6 6.6 22.8 6.6 Q26.6 6.8 26.4 11 Q26.4 15 25 17.4 Q23.8 19.4 22.6 19.4 Q20 19 18.6 11Z" fill="#c99a64"/>
<path d="M18.4 12 Q17.6 6.4 21.6 5.4 Q25 4.8 26.4 7 Q27.8 9 26.6 12.4 Q26.4 10 25 8.8 Q22.6 9.6 20 8.8 Q18.8 10 18.4 12Z" fill="#4a2a12"/>
<path d="M1.7 27.8 Q1.9 23 7.4 21.6 L11 20.4 L16.4 20.4 L20.4 21.6 Q25.8 23 26.1 27.8 Q26 30.2 22.6 31 Q13.8 33.2 5.2 31 Q1.8 30.2 1.7 27.8Z" fill="url(#group_b)"/>
<path d="M10.8 17 L11 21 Q13.7 24 16.6 21 L16.8 17Z" fill="#e8a860"/>
<path d="M8.6 11 Q8.4 5.4 13.8 5.2 Q19 5.4 18.9 11 Q19 15 17.4 18 Q15.6 20.8 13.7 20.9 Q11.8 20.8 10 18 Q8.4 15 8.6 11Z" fill="url(#group_s)"/>
<path d="M8.2 12 Q7 5.6 11.8 3.8 Q16 2.6 18.4 5 Q20.6 7 19.3 12 Q19 9.2 17.4 8 Q14.6 9.2 10.8 8.2 Q8.8 9.6 8.2 12Z" fill="url(#group_h)"/>
</svg><div class="lb">Gruppo</div></div>
<div class="it" style="left:510.5px;top:28px"><svg class="ic" width="32" height="32" viewBox="0 0 32 32" style=""><defs>
<linearGradient id="share_f" x1="0" y1="0" x2="0" y2="1"><stop offset="0" stop-color="#7cbaea"/><stop offset=".4" stop-color="#4696dc"/><stop offset="1" stop-color="#2f7ccb"/></linearGradient>
<linearGradient id="share_hd" x1="0" y1="0" x2="0" y2="1"><stop offset="0" stop-color="#fbd79a"/><stop offset="1" stop-color="#e9a550"/></linearGradient>
</defs>
<path d="M4.2 5 Q4.2 1.2 6 1.2 L11 1.2 Q12.2 1.2 12.6 2.6 L13.2 4.2 L29.4 4.2 Q30.8 4.2 30.8 5.6 L30.8 9 L4.2 9Z" fill="#4a8fd2"/>
<path d="M.9 8 Q.9 6 2.8 6 L30 6 Q31.9 6 31.8 8 L31 23 Q30.9 24.8 29.2 24.8 L3.6 24.8 Q1.9 24.8 1.8 23Z" fill="url(#share_f)"/>
<path d="M1.6 7 L31.2 7" stroke="#b3d8f5" stroke-width=".8"/>
<path d="M11.5 15.1 L19.5 11.3 M11.5 15.1 L19.5 19.2" stroke="#fff" stroke-width="1.5"/>
<circle cx="11.5" cy="15.1" r="2.5" fill="#fff"/><circle cx="19.5" cy="11.3" r="2.3" fill="#fff"/><circle cx="19.5" cy="19.2" r="2.3" fill="#fff"/>
<path d="M7 25.4 Q10 24.6 14 25.8 L20 25 Q24 23.2 26 24.4 Q28 25.6 28 27.6 L28 30 Q20 30.6 14 29 Q9 27.6 7 25.4Z" fill="url(#share_hd)"/>
<path d="M27.9 24 L32.4 24.6 L32.6 32.4 L27.9 31Z" fill="#1f2a22"/>
</svg><div class="lb">Cartella<br>condivisa</div></div>
<div class="it" style="left:610.5px;top:28px"><svg class="ic" width="32" height="32" viewBox="0 0 32 32" style=""><defs>
<radialGradient id="directory_g" cx=".4" cy=".35" r=".75"><stop offset="0" stop-color="#8fd8f8"/><stop offset=".6" stop-color="#2b8bd8"/><stop offset="1" stop-color="#1258a6"/></radialGradient>
<radialGradient id="directory_b" cx=".5" cy=".2" r=".9"><stop offset="0" stop-color="#3a6a2a"/><stop offset=".5" stop-color="#16300f"/><stop offset="1" stop-color="#060e04"/></radialGradient>
<linearGradient id="directory_s" x1="0" y1="0" x2="1" y2="0"><stop offset="0" stop-color="#f7cf98"/><stop offset=".5" stop-color="#fde2b8"/><stop offset="1" stop-color="#e8ad68"/></linearGradient>
<clipPath id="directory_c"><circle cx="24.7" cy="13.1" r="7.7"/></clipPath>
</defs>
<ellipse cx="20" cy="30.6" rx="12" ry="1.6" fill="#000" opacity=".12"/>
<circle cx="24.7" cy="13.1" r="7.7" fill="url(#directory_g)"/>
<g clip-path="url(#directory_c)" fill="#8fd14a"><path d="M21 9 Q24 6.5 27.6 8 Q30.4 10 29.6 13 Q27 13.6 26.4 16 Q24.8 19.4 23.4 17.4 Q23.6 14.4 21.6 13 Q20 11 21 9Z"/><path d="M28.6 15 Q31 14 31.6 16.6 Q30.6 19 29 18.6Z"/></g>
<path d="M.6 27.6 Q.8 22.4 6.2 21 L10 19.8 L15.4 19.8 L19.2 21 Q24.4 22.4 24.7 27.6 Q24.6 29.8 21.4 30.4 Q12.6 32 4 30.4 Q.7 29.8 .6 27.6Z" fill="url(#directory_b)"/>
<path d="M10 19.8 L12.8 23.4 L15.4 19.8 L14 26 L12.8 30.6 L11.4 26Z" fill="#2c5a22"/>
<path d="M12.2 22.6 L13.4 22.6 L13.9 30.8 L11.8 30.8Z" fill="#a9d4f4"/>
<path d="M9.8 16 L10 20 Q12.6 22.6 15.4 20 L15.6 16Z" fill="#e8a860"/>
<path d="M7.6 10 Q7.4 4.6 12.7 4.4 Q17.8 4.6 17.7 10 Q17.8 13.8 16.2 16.6 Q14.5 19.4 12.6 19.5 Q10.8 19.4 9 16.6 Q7.4 13.8 7.6 10Z" fill="url(#directory_s)"/>
<path d="M7.2 11.4 Q5.8 5 10.6 2.8 Q12.4 1.6 13.6 2.6 Q16.8 2.4 18.2 5 Q19.4 7.6 18.2 11 Q17.6 8.4 16 7 Q13.4 8.6 9.8 7.6 Q7.8 9.2 7.2 11.4Z" fill="#8a5a2a"/>
</svg><div class="lb">Servizio<br>Directory</div></div>
<div class="sec" style="top:103px"><span>Servizi di Rete</span><i></i></div>
<div class="it" style="left:10.5px;top:125px"><svg class="ic" width="32" height="32" viewBox="0 0 32 32" style=""><defs>
<radialGradient id="web_g" cx=".4" cy=".3" r=".8"><stop offset="0" stop-color="#6fd0f6"/><stop offset=".5" stop-color="#1f8ad8"/><stop offset="1" stop-color="#0d4f9e"/></radialGradient>
<clipPath id="web_c"><circle cx="16.5" cy="16.8" r="14.6"/></clipPath>
</defs>
<ellipse cx="16.5" cy="31" rx="10" ry="1.2" fill="#000" opacity=".12"/>
<circle cx="16.5" cy="16.8" r="14.6" fill="url(#web_g)"/>
<g clip-path="url(#web_c)" fill="#a9d63e">
<path d="M3 11 Q5 6 10 4.6 Q13 5 12 7.6 Q10.4 9 11 11 Q9 12.4 9.6 14.6 Q8 17.6 5.6 17.4 Q3.2 15 3 11Z"/>
<path d="M5.4 22 Q8 21.4 9.6 23.6 Q11 26 9.6 28.6 Q7 27 5.4 22Z"/>
<path d="M14 12 Q16 8.4 20 8 Q21 5.6 24.6 6 Q29 8 30.6 13 Q31 17 29.4 19 Q27.6 17 26 18.4 Q24.4 20 25 22 Q24 25.4 21.6 27.4 Q19.6 26 19.8 22.6 Q17.4 21 16.4 18 Q14.6 16.6 14 12Z"/>
</g>
<path d="M4.4 13 Q8 4.4 16.5 3.8 Q23 4 27 8 Q20 6.4 13 9.4 Q7.4 11.6 4.4 13Z" fill="#fff" opacity=".3"/>
</svg><div class="lb">Servizi Web</div></div>
<div class="it" style="left:110.5px;top:125px"><svg class="ic" width="32" height="32" viewBox="0 0 32 32" style=""><defs>
<radialGradient id="ddns_g" cx=".35" cy=".3" r=".85"><stop offset="0" stop-color="#a4c4f2"/><stop offset=".45" stop-color="#4a76d2"/><stop offset="1" stop-color="#1d3a9a"/></radialGradient>
<radialGradient id="ddns_l" cx=".4" cy=".35" r=".7"><stop offset="0" stop-color="#fff"/><stop offset="1" stop-color="#dfe6f2"/></radialGradient>
</defs>
<ellipse cx="16.6" cy="31.2" rx="10" ry="1.2" fill="#000" opacity=".12"/>
<circle cx="16.6" cy="17.2" r="14.6" fill="url(#ddns_g)"/>
<g fill="none" stroke="#dbe8ff" stroke-width=".7" opacity=".7"><path d="M4 12 Q16 8 29 12M3 20 Q16 24 30 20M10 4.6 Q4 17 11 30M23 4.6 Q30 17 22 30"/></g>
<path d="M4 12 Q8 4.600 16.600 3.800 Q23 4 27 8 Q20 6.400 13 9.400 Q7.400 11.600 4 12Z" fill="#fff" opacity=".35"/>
<path d="M22.400 22 L29.400 29.600" stroke="#15151a" stroke-width="2.800" stroke-linecap="round"/>
<circle cx="18" cy="16.400" r="6.800" fill="url(#ddns_l)" stroke="#3a3a44" stroke-width="1.300"/>
<circle cx="18" cy="16.400" r="7.600" fill="none" stroke="#c8c8d2" stroke-width=".5"/>
</svg><div class="lb">DDNS</div></div>
<div class="it" style="left:210.5px;top:125px"><svg class="ic" width="32" height="32" viewBox="0 0 32 32" style=""><defs>
<linearGradient id="quickconnect_w" x1="0" y1="0" x2="0" y2="1"><stop offset="0" stop-color="#ffffff"/><stop offset=".6" stop-color="#f2f9ff"/><stop offset="1" stop-color="#bfe3fb"/></linearGradient>
<linearGradient id="quickconnect_b" x1="0" y1="0" x2="0" y2="1"><stop offset="0" stop-color="#4ab4f4"/><stop offset="1" stop-color="#2a90de"/></linearGradient>
</defs>
<ellipse cx="19" cy="31.4" rx="10.5" ry="1.3" fill="#000" opacity=".14"/>
<g transform="translate(-.8 -.6)"><path d="M4 17.8 Q-.4 14.6 3 11.2 Q2.6 6.6 7.4 6.6 Q8.6 1 14 1 Q19.4 1.2 19.6 7 L20 18Z" fill="url(#quickconnect_b)"/>
<path d="M9 26 Q3.200 25.600 3.600 20.600 Q4 16 9 15.400 Q9.600 10.600 14 10.800 Q15.600 5 21 5 Q27.400 5.200 27.600 12 Q32 12.600 31.400 17 Q33.400 19 32.600 22 Q31.600 26 27 26Z" fill="url(#quickconnect_w)" stroke="#52b4f2" stroke-width="1"/></g>
</svg><div class="lb">QuickConnect</div></div>
<div class="it" style="left:310.5px;top:125px"><svg class="ic" width="32" height="32" viewBox="0 0 32 32" style=""><defs>
<linearGradient id="router_t" x1="0" y1="0" x2="0" y2="1"><stop offset="0" stop-color="#1c1c20"/><stop offset=".5" stop-color="#35353a"/><stop offset="1" stop-color="#232327"/></linearGradient>
</defs>
<ellipse cx="16.600" cy="29.400" rx="15" ry="1.200" fill="#000" opacity=".15"/>
<path d="M7.300 14.400 L3.800 4.400M25.900 14.400 L28.600 4.400" stroke="#1f1f24" stroke-width="1.400" stroke-linecap="round"/>
<path d="M3.800 14.200 L29.700 14.200 L31.900 25.900 L1.300 25.900Z" fill="url(#router_t)"/>
<path d="M5 17 L28.600 17" stroke="#4c4c54" stroke-width=".6"/>
<path d="M1.300 25.900 L31.900 25.900 L31.900 28 Q31.900 28.900 31 28.900 L2.200 28.900 Q1.300 28.900 1.300 28Z" fill="#121215"/>
<path d="M1.600 27 L31.600 27 L31.600 28 L1.600 28Z" fill="#c8c8d0"/>
<rect x="3" y="27" width="2" height="1" fill="#5aa8ee"/>
</svg><div class="lb">Configurazione<br>router</div></div>
<div class="it" style="left:410.5px;top:125px"><svg class="ic" width="32" height="32" viewBox="0 0 32 32" style=""><defs>
<linearGradient id="firewall_w" x1="0" y1="0" x2="1" y2="0"><stop offset="0" stop-color="#f28a1e"/><stop offset=".35" stop-color="#e86a18"/><stop offset="1" stop-color="#c8481a"/></linearGradient>
<linearGradient id="firewall_a" x1="0" y1="0" x2="1" y2="1"><stop offset="0" stop-color="#4ab0f6"/><stop offset=".6" stop-color="#1f7ed8"/><stop offset="1" stop-color="#8fd0fa"/></linearGradient>
</defs>
<path d="M1 10.200 L30.500 9.100 L30.500 25.200 L5.500 30.400 L1.400 28Z" fill="url(#firewall_w)"/>
<path d="M1 10.200 L5 11.600 L5.500 30.400 L1.400 28Z" fill="#a83c12"/>
<g stroke="#8a3010" stroke-width=".8" fill="none"><path d="M5 16.400 L30.500 14.400M5.200 21.400 L30.500 19.600M5.400 26 L30.500 23.400M12 11.400V16M22 10.600V15M17 16V20.600M27 14.800V19.800M11 21V25.400M22 20.200V24.400"/></g>
<path d="M1 10.200 L30.500 9.100 L30.500 10.400 L5 11.600Z" fill="#ffb050" opacity=".6"/>
<path d="M27.200 2.200 L13.400 17.500 L27 27 L32 28.400 L19 17 L27.600 10.200Z" fill="url(#firewall_a)"/>
</svg><div class="lb">Firewall</div></div>
<div class="it" style="left:510.5px;top:125px"><svg class="ic" width="32" height="32" viewBox="0 0 32 32" style=""><defs><linearGradient id="autoblock_r" x1="0" y1="0" x2="0" y2="1"><stop offset="0" stop-color="#f0582c"/><stop offset="1" stop-color="#b82410"/></linearGradient></defs>
<ellipse cx="16.600" cy="31.400" rx="9" ry="1" fill="#000" opacity=".12"/>
<circle cx="16.600" cy="16.800" r="13" fill="#fff" fill-opacity=".6"/>
<text x="16.800" y="23.400" text-anchor="middle" font-family="Liberation Sans, sans-serif" font-weight="bold" font-style="italic" font-size="18" fill="#14285a" letter-spacing="-1">IP</text>
<circle cx="16.600" cy="16.800" r="13.200" fill="none" stroke="url(#autoblock_r)" stroke-width="2.900"/>
<path d="M7.600 7.600 L25.800 25.800" stroke="url(#autoblock_r)" stroke-width="2.900"/>
</svg><div class="lb">Blocco<br>automatico</div></div>
<div class="it" style="left:610.5px;top:125px"><svg class="ic" width="32" height="32" viewBox="0 0 32 32" style=""><defs>
<linearGradient id="terminal_f" x1="0" y1="0" x2="0" y2="1"><stop offset="0" stop-color="#8e8e94"/><stop offset=".08" stop-color="#e6e6ea"/><stop offset=".85" stop-color="#d6d6dc"/><stop offset="1" stop-color="#a4a4ac"/></linearGradient>
<linearGradient id="terminal_s" x1="0" y1="0" x2="1" y2="1"><stop offset="0" stop-color="#1c3c5c"/><stop offset=".5" stop-color="#0a1e38"/><stop offset="1" stop-color="#061428"/></linearGradient>
</defs>
<rect x="1.300" y="2.900" width="30.700" height="27" rx="1.800" fill="url(#terminal_f)"/>
<rect x="3.900" y="6.900" width="25.500" height="19" fill="url(#terminal_s)"/>
<path d="M6.600 10 L11.400 12.600 L6.600 15.200" fill="none" stroke="#7ed321" stroke-width="1.800"/>
<path d="M12.600 15.800 H18.500" stroke="#7ed321" stroke-width="1.600"/>
</svg><div class="lb">Terminale</div></div>
<div class="it" style="left:710.5px;top:125px"><svg class="ic" width="32" height="32" viewBox="0 0 32 32" style=""><defs>
<linearGradient id="snmp_g" x1="0" y1="0" x2="1" y2="1"><stop offset="0" stop-color="#a4e82c"/><stop offset="1" stop-color="#5cba14"/></linearGradient>
<linearGradient id="snmp_o" x1="0" y1="0" x2="0" y2="1"><stop offset="0" stop-color="#ffa41c"/><stop offset="1" stop-color="#ffc45c"/></linearGradient>
<linearGradient id="snmp_c" x1="0" y1="0" x2="1" y2="1"><stop offset="0" stop-color="#2ad0fa"/><stop offset="1" stop-color="#12a8e8"/></linearGradient>
<linearGradient id="snmp_p" x1="0" y1="0" x2="1" y2="1"><stop offset="0" stop-color="#a040e0"/><stop offset="1" stop-color="#6a20b0"/></linearGradient>
</defs>
<ellipse cx="17" cy="31.600" rx="9" ry=".9" fill="#000" opacity=".12"/>
<path d="M16.600 19.200 L4.800 24.700 A13 13 0 0 0 26.600 27.600Z" fill="#8a2a0a"/>
<path d="M16.600 19 L16.600 6 A13 13 0 0 0 4.800 24.500Z" fill="#3a7a0a"/>
<path d="M17.600 19.600 L26 26.700 A11 11 0 0 0 28.600 18.600Z" fill="#3c1070"/>
<path d="M16.600 17.600 L16.600 4.600 A13 13 0 0 0 4.800 23.100Z" fill="url(#snmp_g)"/>
<path d="M16.600 17.600 L4.800 23.100 A13 13 0 0 0 26.600 26Z" fill="url(#snmp_o)"/>
<path d="M17.600 18 L26 25.100 A11 11 0 0 0 28.600 17Z" fill="url(#snmp_p)"/>
<path d="M18.800 16.600 L31.300 14.800 L31.300 13.400 L18.800 15.200Z" fill="#0a6aa8"/>
<path d="M18.800 15.200 L31.300 13.400 A12.600 12.600 0 0 0 18.800 2.600Z" fill="url(#snmp_c)"/>
</svg><div class="lb">SNMP</div></div>
<div class="sec" style="top:200px"><span>Sistema</span><i></i></div>
<div class="it" style="left:10.5px;top:222px"><svg class="ic" width="32" height="32" viewBox="0 0 32 32" style=""><defs>
<linearGradient id="network_p" x1="0" y1="0" x2="0" y2="1"><stop offset="0" stop-color="#e8e8ec"/><stop offset=".5" stop-color="#b8b8be"/><stop offset="1" stop-color="#8e8e96"/></linearGradient>
<linearGradient id="network_w" x1="0" y1="0" x2="0" y2="1"><stop offset="0" stop-color="#ffffff"/><stop offset="1" stop-color="#e4e6ea"/></linearGradient>
<linearGradient id="network_r" x1="0" y1="0" x2="0" y2="1"><stop offset="0" stop-color="#3f80e0"/><stop offset="1" stop-color="#1f56b8"/></linearGradient>
</defs>
<rect x="3.900" y="27.400" width="25.500" height="3.200" rx="1.600" fill="url(#network_p)"/>
<rect x="13.400" y="26" width="5.800" height="4.700" fill="#1f6ac8"/>
<path d="M6.800 14 L16.500 4.600 L26.500 14 L26.500 25.200 L6.800 25.200Z" fill="url(#network_w)" stroke="#b4b6bc" stroke-width=".5"/>
<path d="M6.800 24.400 H26.500 V25.600 H6.800Z" fill="#55565c"/>
<path d="M16.500 2 L29.600 14.800 L28.200 16.600 L16.500 5.600 L4.800 16.600 L3.400 14.800Z" fill="url(#network_r)"/>
<rect x="15" y="10" width="3.400" height="3.600" fill="#2a6ab8" stroke="#50555c" stroke-width=".4"/>
<rect x="8.800" y="17" width="3.400" height="4.800" fill="#2a7ad0" stroke="#50555c" stroke-width=".4"/>
<rect x="21.200" y="17" width="3.400" height="4.800" fill="#2a7ad0" stroke="#50555c" stroke-width=".4"/>
<path d="M16.700 18 V24.400" stroke="#c4c6cc" stroke-width=".5"/>
</svg><div class="lb">Rete</div></div>
<div class="it" style="left:110.5px;top:222px"><svg class="ic" width="32" height="32" viewBox="0 0 32 32" style=""><defs>
<linearGradient id="dsmsettings_g" x1="0" y1="0" x2="1" y2="1"><stop offset="0" stop-color="#fafafa"/><stop offset=".5" stop-color="#d4d4d8"/><stop offset="1" stop-color="#b0b0b6"/></linearGradient>
<radialGradient id="dsmsettings_i" cx=".4" cy=".35" r=".7"><stop offset="0" stop-color="#f4f4f6"/><stop offset="1" stop-color="#9a9aa2"/></radialGradient>
</defs>
<ellipse cx="17" cy="31.3" rx="10" ry="1" fill="#000" opacity=".14"/>
<path d="M14.29 5.51 L15.01 2.33 L18.79 2.33 L19.51 5.51 L22.75 6.85 L25.51 5.11 L28.19 7.79 L26.45 10.55 L27.79 13.79 L30.97 14.51 L30.97 18.29 L27.79 19.01 L26.45 22.25 L28.19 25.01 L25.51 27.69 L22.75 25.95 L19.51 27.29 L18.79 30.47 L15.01 30.47 L14.29 27.29 L11.05 25.95 L8.29 27.69 L5.61 25.01 L7.35 22.25 L6.01 19.01 L2.83 18.29 L2.83 14.51 L6.01 13.79 L7.35 10.55 L5.61 7.79 L8.29 5.11 L11.05 6.85Z" fill="url(#dsmsettings_g)" stroke="#6a6a70" stroke-width=".7" stroke-linejoin="round"/>
<circle cx="16.9" cy="16.4" r="9" fill="#eeeef0"/>
<circle cx="16.9" cy="16.4" r="8.4" fill="none" stroke="#3a5ab8" stroke-width="1.1"/>
<circle cx="16.9" cy="16.4" r="6.4" fill="url(#dsmsettings_i)"/>
<circle cx="16.9" cy="16.4" r="3.6" fill="#fdfdfd" stroke="#7a7a82" stroke-width=".6"/>
</svg><div class="lb">Impostazioni<br>DSM</div></div>
<div class="it" style="left:210.5px;top:222px"><svg class="ic" width="32" height="32" viewBox="0 0 32 32" style=""><defs>
<linearGradient id="regional_m" x1="0" y1="0" x2="0" y2="1"><stop offset="0" stop-color="#2a9ae0"/><stop offset="1" stop-color="#0d4f9e"/></linearGradient>
<radialGradient id="regional_c" cx=".4" cy=".35" r=".75"><stop offset="0" stop-color="#ffffff"/><stop offset="1" stop-color="#e6e6ea"/></radialGradient>
</defs>
<rect x="1.300" y="1.800" width="29.200" height="23.400" fill="#fcfcfd" stroke="#d4d6dc" stroke-width=".5"/>
<rect x="3.500" y="4" width="24.800" height="19.400" fill="url(#regional_m)"/>
<g fill="#a4d83a"><path d="M5 8 Q7 6 11 6.600 Q13 7.600 11.600 9.400 Q10 10.400 10.400 12 Q9 14 7.600 13 Q5.600 11 5 8Z"/><path d="M8.600 15 Q11 14.400 12 16.600 Q12 20 10.600 22 Q9 19.600 8.600 15Z"/><path d="M15 8 Q18 5.600 22 6.400 Q26 6 27.600 8.600 Q27 11.600 24 12 Q21 11.600 19 13 Q16.600 13 15.600 11 Q14.600 9.600 15 8Z"/></g>
<path d="M3.500 4 H28.300 V8 Q16 9 3.500 13Z" fill="#fff" opacity=".14"/>
<ellipse cx="22.600" cy="30.800" rx="7" ry=".9" fill="#000" opacity=".15"/>
<circle cx="22.100" cy="21.200" r="8.700" fill="url(#regional_c)" stroke="#1a1a1e" stroke-width="1.800"/>
<path d="M17.900 17 L22.100 21.400 L25.400 18" fill="none" stroke="#1a1a1e" stroke-width=".9"/>
<circle cx="22.100" cy="21.400" r="1" fill="#111"/>
</svg><div class="lb">Opzioni<br>regionali</div></div>
<div class="it" style="left:310.5px;top:222px"><svg class="ic" width="32" height="32" viewBox="0 0 32 32" style=""><defs>
<radialGradient id="notify_b" cx=".45" cy=".25" r=".85"><stop offset="0" stop-color="#6cc0ff"/><stop offset=".5" stop-color="#2a94f4"/><stop offset="1" stop-color="#1272d8"/></radialGradient>
</defs>
<ellipse cx="17" cy="30.400" rx="9" ry="1.100" fill="#000" opacity=".15"/>
<path d="M10.600 23.600 Q10 26 8 27.600 Q12.600 27.400 14.800 25Z" fill="#1f80e4"/>
<ellipse cx="16.600" cy="13.100" rx="15" ry="12" fill="url(#notify_b)"/>
<ellipse cx="16.600" cy="7.600" rx="11" ry="5" fill="#fff" opacity=".22"/>
<path d="M14.700 6.200 Q16.600 5.400 18.500 6.200 L17.900 17.200 L15.300 17.200Z" fill="#fff"/>
<ellipse cx="16.600" cy="19.400" rx="1.700" ry="1.400" fill="#fff"/>
</svg><div class="lb">Notifica</div></div>
<div class="it" style="left:410.5px;top:222px"><svg class="ic" width="32" height="32" viewBox="0 0 32 32" style=""><defs>
<radialGradient id="power_b" cx=".38" cy=".3" r=".8"><stop offset="0" stop-color="#fffbe0"/><stop offset=".35" stop-color="#ffe64a"/><stop offset="1" stop-color="#f4b400"/></radialGradient>
<linearGradient id="power_s" x1="0" y1="0" x2="1" y2="0"><stop offset="0" stop-color="#9a9aa0"/><stop offset=".4" stop-color="#f4f4f6"/><stop offset="1" stop-color="#7a7a82"/></linearGradient>
<radialGradient id="power_gl" cx=".5" cy=".5" r=".5"><stop offset=".6" stop-color="#ffe44a" stop-opacity=".35"/><stop offset="1" stop-color="#ffe44a" stop-opacity="0"/></radialGradient>
</defs>
<circle cx="17" cy="12" r="13" fill="url(#power_gl)"/>
<ellipse cx="17" cy="30.600" rx="5" ry=".8" fill="#000" opacity=".15"/>
<path d="M13.400 24 L20.700 24 L20.300 28 Q19 30.200 17 30.200 Q15 30.200 13.800 28Z" fill="url(#power_s)"/>
<path d="M13.600 25.600 H20.500M13.800 27.200 H20.300" stroke="#6a6a72" stroke-width=".6"/>
<path d="M15.400 29.400 H18.700 L18 30.600 H16Z" fill="#222"/>
<path d="M17 2.900 Q26.200 3.200 26.200 12 Q26 15.600 23.400 18.600 Q21.600 21 21.200 24.200 L12.800 24.200 Q12.400 21 10.600 18.600 Q8 15.600 7.800 12 Q7.800 3.200 17 2.900Z" fill="url(#power_b)" stroke="#f0b000" stroke-width=".5"/>
<ellipse cx="14" cy="8.600" rx="4" ry="3" fill="#fff" opacity=".7" transform="rotate(-30 14 8.600)"/>
</svg><div class="lb">Alimentazione</div></div>
<div class="it" style="left:510.5px;top:222px"><svg class="ic" width="32" height="32" viewBox="0 0 32 32" style=""><defs>
<linearGradient id="external_t" x1="0" y1="0" x2="0" y2="1"><stop offset="0" stop-color="#d8d8dc"/><stop offset=".3" stop-color="#f6f6f8"/><stop offset="1" stop-color="#dcdce0"/></linearGradient>
</defs>
<ellipse cx="17" cy="31.400" rx="14" ry=".9" fill="#000" opacity=".15"/>
<path d="M6.400 1.100 L27.800 1.100 Q28.800 1.100 29 2.100 L31.900 25.900 L2.400 25.900 L5.300 2.100 Q5.500 1.100 6.400 1.100Z" fill="url(#external_t)" stroke="#c4c4ca" stroke-width=".5"/>
<path d="M2.400 25.900 H31.900 V29 Q31.900 31 29.900 31 H4.400 Q2.400 31 2.400 29Z" fill="#1a1a1c"/>
<path d="M4 27.600 H24" stroke="#3c3c40" stroke-width="1.200" stroke-dasharray="1 .8"/>
<rect x="25.400" y="27.400" width="1.600" height="2.200" fill="#e8821e"/><rect x="28.300" y="27.400" width="1.600" height="2.200" fill="#5ad21e"/>
<g fill="none" stroke="#2a8ad8" stroke-width="1.300" stroke-linecap="round" stroke-linejoin="round"><path d="M16.600 6.400 V19"/><path d="M16.600 16 L12 12.600 V10.600"/><path d="M16.600 13.600 L21.200 10.600 V9"/></g>
<circle cx="16.600" cy="20.800" r="2.300" fill="#2a8ad8"/><circle cx="12" cy="9.800" r="1.300" fill="#2a8ad8"/><rect x="20" y="6.800" width="2.400" height="2.400" fill="#2a8ad8"/><path d="M16.600 4.400 L18.200 7 H15Z" fill="#2a8ad8"/>
</svg><div class="lb">Periferiche<br>Esterne</div></div>
<div class="it" style="left:610.5px;top:222px"><svg class="ic" width="32" height="32" viewBox="0 0 32 32" style=""><defs>
<radialGradient id="restore_g" cx=".4" cy=".25" r=".9"><stop offset="0" stop-color="#7ed23c"/><stop offset=".5" stop-color="#4aa820"/><stop offset="1" stop-color="#2f8212"/></radialGradient>
</defs>
<ellipse cx="16.500" cy="31.400" rx="9" ry=".9" fill="#000" opacity=".12"/>
<circle cx="16.500" cy="16.800" r="14.600" fill="url(#restore_g)"/>
<path d="M21.400 13 A7 7 0 1 1 14.600 11.500" fill="none" stroke="#f2fbe8" stroke-width="2.200"/>
<path d="M12.600 10.400 L18.600 7.200 L18 13.800Z" fill="#f2fbe8"/>
<ellipse cx="16.500" cy="8.400" rx="10.500" ry="5.400" fill="#fff" opacity=".12"/>
</svg><div class="lb">Ripristino dei<br>valori predefiniti</div></div>
<div class="it" style="left:710.5px;top:222px"><svg class="ic" width="32" height="32" viewBox="0 0 32 32" style=""><defs>
<radialGradient id="update_g" cx=".38" cy=".3" r=".8"><stop offset="0" stop-color="#8fdcf8"/><stop offset=".5" stop-color="#2a8ad0"/><stop offset="1" stop-color="#12509a"/></radialGradient>
<linearGradient id="update_b" x1="0" y1="1" x2="0" y2="0"><stop offset="0" stop-color="#6fb0f0" stop-opacity=".3"/><stop offset=".4" stop-color="#2a74d0"/><stop offset="1" stop-color="#1248b8"/></linearGradient>
<linearGradient id="update_gr" x1="0" y1="0" x2="0" y2="1"><stop offset="0" stop-color="#a4e05a" stop-opacity=".4"/><stop offset=".4" stop-color="#5cc028"/><stop offset="1" stop-color="#36a010"/></linearGradient>
</defs>
<circle cx="16.600" cy="17.500" r="9.100" fill="url(#update_g)"/>
<g fill="none" stroke="#d4f2fc" stroke-width=".6" opacity=".75"><path d="M9 13 Q17 10 25 14M8 20 Q17 23 25.400 19M12 9.600 Q8 17 13 25.600M20 9 Q26 17 20 26M10 16 L24 17.600M14 11 L22 23"/></g>
<path d="M6 27 Q.4 16 8.600 7.200 L6.600 5.200 L13 3 L12.400 10 L10.400 8.600 Q4.400 16 8.200 25.600Z" fill="url(#update_b)"/>
<path d="M26.400 6.800 Q33.400 17 25.800 27.200 L27.800 29 L21.200 31.800 L21.800 24.800 L23.800 26 Q28.600 17 24.200 8.400Z" fill="url(#update_gr)"/>
</svg><div class="lb">Aggiornamento<br>del DSM</div></div>
<div class="sec" style="top:297px"><span>Impostazioni applicazione</span><i></i></div>
<div class="it" style="left:10.5px;top:319px"><svg class="ic" width="32" height="32" viewBox="0 0 32 32" style=""><defs>
<linearGradient id="apppriv_o" x1="0" y1="0" x2="0" y2="1"><stop offset="0" stop-color="#f8b420"/><stop offset=".45" stop-color="#f28a1c"/><stop offset="1" stop-color="#e45c14"/></linearGradient>
<linearGradient id="apppriv_l" x1="0" y1="0" x2="1" y2="0"><stop offset="0" stop-color="#c8a840"/><stop offset=".4" stop-color="#f8ecb0"/><stop offset="1" stop-color="#c09c38"/></linearGradient>
</defs>
<path d="M.6 4.800 Q.6 2.900 2.500 2.900 H22.400 Q24.300 2.900 24.300 4.800 V25.500 Q24.300 27.400 22.400 27.400 H2.500 Q.6 27.400 .6 25.500Z" fill="url(#apppriv_o)"/>
<path d="M.6 4.800 Q.6 2.900 2.500 2.900 H22.400 Q24.300 2.900 24.300 4.800 V5.600 H.6Z" fill="#b8500e"/>
<path d="M.8 26 Q.8 27.400 2.500 27.400 H22.400 Q24.100 27.400 24.100 26Z" fill="#a8440c"/>
<path d="M8.600 7.200 L12.800 11.600 L8.600 16 L4.400 11.600Z" fill="#fdfdfd"/>
<rect x="14.600" y="8.600" width="6.200" height="6.200" rx=".6" fill="#f6f4f2"/>
<rect x="5.500" y="18" width="6.200" height="6.200" rx=".6" fill="#fbfbfb"/><rect x="14.600" y="18" width="6.200" height="6.200" rx=".6" fill="#fbfbfb"/>
<path d="M23.400 21 V17 Q23.400 12.600 26.600 12.600 Q29.800 12.600 29.800 17 V21" fill="none" stroke="#d8bc5c" stroke-width="2.200"/>
<path d="M23.400 21 V17 Q23.400 12.600 26.600 12.600" fill="none" stroke="#f4e4a0" stroke-width=".8"/>
<rect x="20.700" y="20" width="11.500" height="11" rx="1.200" fill="url(#apppriv_l)" stroke="#a88a30" stroke-width=".5"/>
<rect x="20.900" y="25.400" width="11.100" height="2.800" fill="#f4c81c"/>
<path d="M21.600 28.200 L23.600 25.400 H25.400 L23.400 28.200Z M25.800 28.200 L27.800 25.400 H29.600 L27.600 28.200Z M30 28.200 L32 25.400 V28.200Z" fill="#1a1a10"/>
</svg><div class="lb">Privilegi<br>applicazione</div></div>
<div class="it" style="left:110.5px;top:319px"><svg class="ic" width="32" height="32" viewBox="0 0 32 32" style=""><defs>
<linearGradient id="appportal_o" x1="0" y1="0" x2="0" y2="1"><stop offset="0" stop-color="#f8b420"/><stop offset=".45" stop-color="#f28a1c"/><stop offset="1" stop-color="#e45c14"/></linearGradient>
<linearGradient id="appportal_g" x1="0" y1="0" x2="0" y2="1"><stop offset="0" stop-color="#8cec2c"/><stop offset="1" stop-color="#3cb010"/></linearGradient>
</defs>
<path d="M.6 4.800 Q.6 2.900 2.500 2.900 H22.400 Q24.300 2.900 24.300 4.800 V25.500 Q24.300 27.400 22.400 27.400 H2.500 Q.6 27.400 .6 25.500Z" fill="url(#appportal_o)"/>
<path d="M.6 4.800 Q.6 2.900 2.500 2.900 H22.400 Q24.300 2.900 24.300 4.800 V5.600 H.6Z" fill="#b8500e"/>
<path d="M.8 26 Q.8 27.400 2.500 27.400 H22.400 Q24.100 27.400 24.100 26Z" fill="#a8440c"/>
<path d="M8.600 7.200 L12.800 11.600 L8.600 16 L4.400 11.600Z" fill="#fdfdfd"/>
<rect x="14.600" y="8.600" width="6.200" height="6.200" rx=".6" fill="#f6f4f2"/>
<rect x="5.500" y="18" width="6.200" height="6.200" rx=".6" fill="#fbfbfb"/><rect x="14.600" y="18" width="6.200" height="6.200" rx=".6" fill="#fbfbfb"/>
<path d="M23.600 16.600 L32.400 15 L28 24 L26.600 21.400 Q22.600 23.400 23.200 26.400 Q24.400 28.800 30.600 28.600 Q26 31.400 21.400 29.800 Q17.600 27.600 19.200 23.600 Q20.800 20.400 25 19Z" fill="url(#appportal_g)" stroke="#2f9a0c" stroke-width=".4"/>
</svg><div class="lb">Portale<br>applicazione</div></div>
<div class="it" style="left:210.5px;top:319px"><svg class="ic" width="32" height="32" viewBox="0 0 32 32" style=""><defs>
<linearGradient id="syslog_b" x1="0" y1="0" x2="1" y2="1"><stop offset="0" stop-color="#e0b468"/><stop offset="1" stop-color="#a8742c"/></linearGradient>
<linearGradient id="syslog_c" x1="0" y1="0" x2="0" y2="1"><stop offset="0" stop-color="#d8d8dc"/><stop offset="1" stop-color="#8a8a92"/></linearGradient>
</defs>
<path d="M2.400 5.100 L26.900 2.200 L29.400 28.800 L5.700 31.700Z" fill="url(#syslog_b)"/>
<path d="M6.400 8 L26.100 5.500 L28 25.200 L24 27 L9 28Z" fill="#fbfbfc" stroke="#d4d4d8" stroke-width=".4"/>
<path d="M9.400 2.600 L19.600 1.100 L20 5.500 L10 7Z" fill="url(#syslog_c)"/>
<g fill="#5a5a62"><circle cx="9.200" cy="11.800" r="1"/><circle cx="10.500" cy="16.800" r="1"/><circle cx="11.500" cy="22.600" r="1"/></g>
<g stroke="#9a9aa2" stroke-width=".9"><path d="M12 11.400 L20 10.400M13.200 16.400 L19 15.700M14.200 22.200 L17 21.800M19 23.200 L25 23.600"/></g>
<path d="M16.600 21.400 L17.600 17.600 L28.600 3.400 L31 5.200 L20 19.400Z" fill="#f4a420"/>
<path d="M17.600 17.600 L28.600 3.400 L29.500 4.100 L18.400 18.400Z" fill="#ffd060"/>
<path d="M16.600 21.400 L17.600 17.600 L20 19.400Z" fill="#f0d8a8"/><path d="M16.600 21.400 L17 19.900 L17.900 20.600Z" fill="#333"/>
<path d="M28.600 3.400 L30 1.700 Q31.800 1.600 32.400 3.400 L31 5.200Z" fill="#e86a8a"/>
</svg><div class="lb">Syslog</div></div>
<div class="it" style="left:310.5px;top:319px"><svg class="ic" width="32" height="32" viewBox="0 0 32 32" style=""><defs>
<linearGradient id="vpn_g" x1="0" y1="0" x2="0" y2="1"><stop offset="0" stop-color="#3f9a10"/><stop offset=".1" stop-color="#8ce03c"/><stop offset=".5" stop-color="#5cc01c"/><stop offset=".9" stop-color="#4aa814"/><stop offset="1" stop-color="#3a8a0e"/></linearGradient>
</defs>
<rect x=".9" y="2.900" width="31.700" height="27.400" rx="2.400" fill="url(#vpn_g)"/>
<rect x="1.900" y="5.400" width="29.700" height="10" rx="1.500" fill="#fff" opacity=".13"/>
<text x="16.800" y="21.800" text-anchor="middle" font-family="Liberation Sans, sans-serif" font-weight="bold" font-size="11.800" fill="#f6fff0" letter-spacing="-.3">VPN</text>
</svg><div class="lb">VPN</div></div>
<div class="it" style="left:410.5px;top:319px"><svg class="ic" width="32" height="32" viewBox="0 0 32 32" style=""><defs>
<linearGradient id="mediaindex_s" x1="0" y1="0" x2="1" y2="1"><stop offset="0" stop-color="#4ac8f8"/><stop offset="1" stop-color="#0f8ad8"/></linearGradient>
<radialGradient id="mediaindex_l" cx=".4" cy=".35" r=".7"><stop offset="0" stop-color="#ffffff"/><stop offset="1" stop-color="#cfe4f4"/></radialGradient>
</defs>
<path d="M.6 5.100 L23.600 2.200 L26.900 25.900 L5.300 29.900Z" fill="#3a2a26"/>
<path d="M6.100 5.500 L21.400 3.700 L24.300 24.800 L9 27.400Z" fill="url(#mediaindex_s)"/>
<path d="M7.400 16.400 L22.800 14" stroke="#1a2a3a" stroke-width="1.200"/>
<g fill="#8a7a70"><rect x="2" y="7" width="2" height="1.600" transform="rotate(-8 3 8)"/><rect x="2.700" y="11" width="2" height="1.600" transform="rotate(-8 3.700 12)"/><rect x="3.400" y="15" width="2" height="1.600" transform="rotate(-8 4.400 16)"/><rect x="4.100" y="19" width="2" height="1.600" transform="rotate(-8 5 20)"/><rect x="4.800" y="23" width="2" height="1.600" transform="rotate(-8 5.800 24)"/></g>
<path d="M22.400 19.400 L30.800 26" stroke="#1a1a3a" stroke-width="2.800" stroke-linecap="round"/>
<circle cx="17.700" cy="14.200" r="6.500" fill="url(#mediaindex_l)" stroke="#4a4a5a" stroke-width="1.100" fill-opacity=".92"/>
</svg><div class="lb">Servizio di<br>indicizzazione<br>multimediale</div></div>
<div class="it" style="left:510.5px;top:319px"><svg class="ic" width="32" height="32" viewBox="0 0 32 32" style=""><defs>
<linearGradient id="netbackup_t" x1="0" y1="0" x2="0" y2="1"><stop offset="0" stop-color="#d8d8dc"/><stop offset=".3" stop-color="#f6f6f8"/><stop offset="1" stop-color="#dcdce0"/></linearGradient>
<linearGradient id="netbackup_p" x1="0" y1="0" x2="0" y2="1"><stop offset="0" stop-color="#e8e8ec"/><stop offset=".5" stop-color="#b8b8be"/><stop offset="1" stop-color="#8e8e96"/></linearGradient>
</defs>
<rect x="2.700" y="27.400" width="27.700" height="3.200" rx="1.600" fill="url(#netbackup_p)"/>
<rect x="14" y="24.400" width="5.200" height="6.200" fill="#2a7ad8"/>
<path d="M8.300 1.100 L26 1.100 Q27 1.100 27.200 2.100 L29.700 20.800 L4.500 20.800 L7.200 2.100 Q7.400 1.100 8.300 1.100Z" fill="url(#netbackup_t)" stroke="#c4c4ca" stroke-width=".5"/>
<path d="M4.500 20.800 H29.700 V23 Q29.700 24.800 27.900 24.800 H6.300 Q4.500 24.800 4.500 23Z" fill="#1a1a1c"/>
<rect x="24.400" y="22" width="1.400" height="1.800" fill="#e8821e"/><rect x="26.800" y="22" width="1.400" height="1.800" fill="#5ad21e"/>
<path d="M20.400 8 A5.400 5.400 0 1 1 14.800 6.600" fill="none" stroke="#2a8ad8" stroke-width="1.900"/>
<path d="M13.200 5.800 L18.200 3.400 L17.600 8.800Z" fill="#2a8ad8"/>
</svg><div class="lb">Backup<br>di Rete</div></div>

 </div>
</div>

<!-- widget panel -->
<div id="wp">
 <div style="position:absolute;left:19px;top:17px"><svg class="ic" width="26" height="28" viewBox="0 0 26 28" style=""><defs><linearGradient id="wshield_g" x1="0" y1="0" x2="1" y2="1"><stop offset="0" stop-color="#8a8a8a"/><stop offset=".5" stop-color="#4a4a4a"/><stop offset=".52" stop-color="#262626"/><stop offset="1" stop-color="#1a1a1a"/></linearGradient></defs><g transform="translate(12.2 13.6) scale(1.13 1.08) translate(-12.4 -14)">
<path d="M12.400 .8 Q17 2.600 23.200 2.200 Q24.400 9 23 16 Q20.600 23.600 12.400 27.400 Q4.200 23.600 1.800 16 Q.4 9 1.600 2.200 Q7.800 2.600 12.400 .8Z" fill="#fff" opacity=".85"/>
<path d="M12.400 2 Q16.800 3.800 22.200 3.400 Q23.200 9.400 22 15.600 Q19.800 22.600 12.400 26.200 Q5 22.600 2.800 15.600 Q1.600 9.400 2.600 3.400 Q8 3.800 12.400 2Z" fill="url(#wshield_g)"/>
<path d="M3.600 6 Q8 5.400 12.400 3.800 Q16.800 5.400 21.200 6" fill="none" stroke="#f4f4f4" stroke-width="1.100"/>
<path d="M10.300 8.600 h4.200 v4.100 h4.100 v4.200 h-4.100 v4.100 h-4.200 v-4.100 h-4.100 v-4.200 h4.100Z" fill="#fff"/>
</g></svg></div>
 <div class="wh" style="top:21px">Stato del sistema</div>
 <div class="wx" style="top:52px">
  <div style="position:absolute;left:21px;top:36px"><svg class="ic" width="64" height="64" viewBox="0 0 64 64" style=""><defs>
<radialGradient id="okcheck_g" cx=".62" cy=".72" r=".75"><stop offset="0" stop-color="#86d886"/><stop offset=".55" stop-color="#43c043"/><stop offset="1" stop-color="#26b026"/></radialGradient>
<radialGradient id="okcheck_o" cx=".5" cy=".5" r=".5"><stop offset=".84" stop-color="#5fe05f" stop-opacity=".55"/><stop offset="1" stop-color="#8ff08f" stop-opacity="0"/></radialGradient>
<linearGradient id="okcheck_h" x1="0" y1="0" x2="0" y2="1"><stop offset="0" stop-color="#fff" stop-opacity=".45"/><stop offset="1" stop-color="#fff" stop-opacity="0"/></linearGradient>
</defs>
<circle cx="30.400" cy="30.300" r="33" fill="url(#okcheck_o)"/>
<circle cx="30.400" cy="30.300" r="28.600" fill="url(#okcheck_g)"/>
<ellipse cx="30.400" cy="20" rx="19" ry="15" fill="url(#okcheck_h)"/>
<path d="M14.200 31.900 L18 28.200 L26.700 37.600 L43.400 19.600 L47.200 23.200 L26.700 45.200Z" fill="#fff"/>
</svg></div>
  <div class="t" style="left:109px;top:23px;font-size:17px;line-height:22px;color:#2a9a22;letter-spacing:.3px">Buono</div>
  <div class="t" style="left:109px;top:48px;font-size:12px;line-height:14px;color:#444;letter-spacing:.35px">DiskStation funziona<br>correttamente.</div>
  <div class="t" style="left:109px;top:111px;font-size:12px;line-height:14px;color:#111;letter-spacing:.4px">Tempo di attività: 00:25:08</div>
 </div>

 <div style="position:absolute;left:19px;top:199px"><svg class="ic" width="26" height="24" viewBox="0 0 26 24" style=""><defs><linearGradient id="wchart_g" x1="0" y1="0" x2="0" y2="1"><stop offset="0" stop-color="#8c8c8c"/><stop offset=".6" stop-color="#4a4a4a"/><stop offset="1" stop-color="#1c1c1c"/></linearGradient></defs>
<path d="M-.4 1.600 h2.600 v17.600 h23.400 v1.800 h-26Z" fill="#fff" stroke="#fff" stroke-width="1.600" opacity=".8"/>
<path d="M-.1 2 L2 3 V19 H25.400 V20.600 H-.1Z" fill="#2a2a2a"/>
<path d="M4.100 7.400 Q4.100 5.100 6.450 5.100 Q8.800 5.100 8.800 7.400 V19.600 H4.100Z" fill="url(#wchart_g)"/>
<path d="M11.200 15 Q11.200 13 13.500 13 Q15.800 13 15.800 15 V19.600 H11.200Z" fill="#222"/>
<path d="M18.200 12.200 Q18.200 10.100 20.600 10.100 Q23 10.100 23 12.200 V19.600 H18.200Z" fill="#262626"/>
</svg></div>
 <div class="wh" style="top:201px">Controllo risorse</div>
 <div class="wx" style="top:232px">
  <div class="bar" style="left:21px"><u style="height:7px"></u></div>
  <div class="bar" style="left:62px"><u style="height:4px"></u></div>
  <div class="t" style="left:14px;top:110px;width:40px;text-align:center;font-size:12px;line-height:14px;color:#111">CPU</div>
  <div class="t" style="left:55px;top:110px;width:40px;text-align:center;font-size:12px;line-height:14px;color:#111">RAM</div>
  <div class="yl" style="top:11px">100</div><div class="yl" style="top:28px">80</div><div class="yl" style="top:46px">60</div><div class="yl" style="top:63px">40</div><div class="yl" style="top:81px">20</div><div class="yl" style="top:99px">0</div>
  <div id="gr"><i></i></div>
  <div style="position:absolute;left:290px;top:52px"><svg class="ic" width="12" height="14" viewBox="0 0 12 14" style=""><path d="M3.400 2 L8.600 7 L3.400 12" fill="none" stroke="#2a2a2a" stroke-width="2.400" stroke-linecap="round" stroke-linejoin="round"/>
</svg></div>
  <div style="position:absolute;left:135px;top:109px"><svg class="ic" width="11" height="14" viewBox="0 0 11 14" style=""><path d="M5.500 2 L10.400 7.400 H7.800 V12.400 H3.200 V7.400 H.6Z" fill="#2f9af0" stroke="#1a6ac0" stroke-width=".6"/>
</svg></div>
  <div class="t" style="left:148px;top:109px;font-size:11px;line-height:14px;color:#111;letter-spacing:.35px">0 KB/s</div>
  <div style="position:absolute;left:188px;top:109px"><svg class="ic" width="11" height="14" viewBox="0 0 11 14" style=""><path d="M5.500 12.800 L10.400 7.400 H7.800 V2.400 H3.200 V7.400 H.6Z" fill="#3fd02a" stroke="#2a9a1a" stroke-width=".6"/>
</svg></div>
  <div class="t" style="left:200px;top:109px;font-size:11px;line-height:14px;color:#111;letter-spacing:.35px">1 KB/s</div>
 </div>

 <div style="position:absolute;left:19px;top:376px"><svg class="ic" width="26" height="30" viewBox="0 0 26 30" style=""><path d="M3.800 2.300 H15 L22.700 10 V25 Q22.700 26.400 21.300 26.400 H3.800 Q2.400 26.400 2.400 25 V3.700 Q2.400 2.300 3.800 2.300Z" fill="#fff" stroke="#fff" stroke-width="5" opacity=".75"/>
<path d="M3.800 2.300 H15 L22.700 10 V25 Q22.700 26.400 21.300 26.400 H3.800 Q2.400 26.400 2.400 25 V3.700 Q2.400 2.300 3.800 2.300Z" fill="#fefefe" stroke="#2a2a2a" stroke-width="2.800" stroke-linejoin="round"/>
<path d="M14.600 2.300 V10.400 H22.700" fill="none" stroke="#2a2a2a" stroke-width="2.400"/>
<path d="M6 7 h4 M6 11.400 h4" stroke="#3a3a3a" stroke-width="2.200"/>
<path d="M6 17 h12.800 M6 21 h12.800" stroke="#1c1c1c" stroke-width="1.900"/>
</svg></div>
 <div class="wh" style="top:381px">Registri recenti</div>
 <div class="wx" style="top:412px">
  <div style="position:absolute;left:22px;top:31px"><svg class="ic" width="14" height="10" viewBox="0 0 14 10" style=""><path d="M2 7.600 L7 2.800 L12 7.600" fill="none" stroke="#b4b6bc" stroke-width="2.300" stroke-linecap="round" stroke-linejoin="round"/>
</svg></div>
  <div class="pg" style="top:56px">1/4</div>
  <div style="position:absolute;left:22px;top:81px"><svg class="ic" width="14" height="10" viewBox="0 0 14 10" style=""><path d="M2 2.400 L7 7.200 L12 2.400" fill="none" stroke="#2a2a2a" stroke-width="2.400" stroke-linecap="round" stroke-linejoin="round"/>
</svg></div>
  <div class="row" style="top:6px;background:rgba(255,255,255,.35)"><svg class="ic" width="13" height="13" viewBox="0 0 13 13" style=""><defs><radialGradient id="info13_g" cx=".4" cy=".3" r=".8"><stop offset="0" stop-color="#9ccdf6"/><stop offset=".5" stop-color="#3f8ee0"/><stop offset="1" stop-color="#1f5eb8"/></radialGradient></defs>
<circle cx="6.500" cy="6.500" r="6.300" fill="url(#info13_g)" stroke="#c4dcf4" stroke-width=".5"/>
<circle cx="6.600" cy="3.400" r="1.100" fill="#fff"/>
<path d="M5.200 5.400 H7.600 V10.400 H5.600 V6.400 H5.200Z" fill="#fff"/>
</svg><span>Access right of the shared folder [T...</span></div>
  <div class="row" style="top:30px;background:rgba(222,224,234,.8)"><svg class="ic" width="13" height="13" viewBox="0 0 13 13" style=""><defs><radialGradient id="info13_g" cx=".4" cy=".3" r=".8"><stop offset="0" stop-color="#9ccdf6"/><stop offset=".5" stop-color="#3f8ee0"/><stop offset="1" stop-color="#1f5eb8"/></radialGradient></defs>
<circle cx="6.500" cy="6.500" r="6.300" fill="url(#info13_g)" stroke="#c4dcf4" stroke-width=".5"/>
<circle cx="6.600" cy="3.400" r="1.100" fill="#fff"/>
<path d="M5.200 5.400 H7.600 V10.400 H5.600 V6.400 H5.200Z" fill="#fff"/>
</svg><span>Shared folder [Test] was set to sho...</span></div>
  <div class="row" style="top:54px;background:rgba(247,248,251,.9)"><svg class="ic" width="13" height="13" viewBox="0 0 13 13" style=""><defs><radialGradient id="info13_g" cx=".4" cy=".3" r=".8"><stop offset="0" stop-color="#9ccdf6"/><stop offset=".5" stop-color="#3f8ee0"/><stop offset="1" stop-color="#1f5eb8"/></radialGradient></defs>
<circle cx="6.500" cy="6.500" r="6.300" fill="url(#info13_g)" stroke="#c4dcf4" stroke-width=".5"/>
<circle cx="6.600" cy="3.400" r="1.100" fill="#fff"/>
<path d="M5.200 5.400 H7.600 V10.400 H5.600 V6.400 H5.200Z" fill="#fff"/>
</svg><span>Shared folder [Test] was created.</span></div>
  <div class="row" style="top:78px;background:rgba(222,224,234,.9)"><svg class="ic" width="13" height="13" viewBox="0 0 13 13" style=""><defs><radialGradient id="info13_g" cx=".4" cy=".3" r=".8"><stop offset="0" stop-color="#9ccdf6"/><stop offset=".5" stop-color="#3f8ee0"/><stop offset="1" stop-color="#1f5eb8"/></radialGradient></defs>
<circle cx="6.500" cy="6.500" r="6.300" fill="url(#info13_g)" stroke="#c4dcf4" stroke-width=".5"/>
<circle cx="6.600" cy="3.400" r="1.100" fill="#fff"/>
<path d="M5.200 5.400 H7.600 V10.400 H5.600 V6.400 H5.200Z" fill="#fff"/>
</svg><span>Windows file service was started.</span></div>
  <div class="row" style="top:102px;background:rgba(244,245,250,.95)"><svg class="ic" width="13" height="13" viewBox="0 0 13 13" style=""><defs><radialGradient id="info13_g" cx=".4" cy=".3" r=".8"><stop offset="0" stop-color="#9ccdf6"/><stop offset=".5" stop-color="#3f8ee0"/><stop offset="1" stop-color="#1f5eb8"/></radialGradient></defs>
<circle cx="6.500" cy="6.500" r="6.300" fill="url(#info13_g)" stroke="#c4dcf4" stroke-width=".5"/>
<circle cx="6.600" cy="3.400" r="1.100" fill="#fff"/>
<path d="M5.200 5.400 H7.600 V10.400 H5.600 V6.400 H5.200Z" fill="#fff"/>
</svg><span>Windows file service was stopped.</span></div>
 </div>

 <div style="position:absolute;left:19px;top:558px"><svg class="ic" width="26" height="28" viewBox="0 0 26 28" style=""><g fill="none" stroke-linecap="round">
<g stroke="#fff" stroke-width="5" opacity=".55"><path transform="translate(7.700 8) rotate(45)" d="M4.400 -3.600 L-2.600 -3.600 A3.600 3.600 0 0 0 -2.600 3.600 L4.400 3.600"/><path transform="translate(18.900 18.700) rotate(45)" d="M-4.400 -3.600 L2.600 -3.600 A3.600 3.600 0 0 1 2.600 3.600 L-4.400 3.600"/></g>
<g stroke="#2a2a2a" stroke-width="2.500"><path transform="translate(7.700 8) rotate(45)" d="M4.400 -3.600 L-2.600 -3.600 A3.600 3.600 0 0 0 -2.600 3.600 L4.400 3.600"/><path transform="translate(18.900 18.700) rotate(45)" d="M-4.400 -3.600 L2.600 -3.600 A3.600 3.600 0 0 1 2.600 3.600 L-4.400 3.600"/>
<path d="M9.400 9.600 L17.200 17.200"/></g></g>
</svg></div>
 <div class="wh" style="top:561px">Connessioni correnti</div>
 <div class="wx" style="top:592px">
  <div style="position:absolute;left:22px;top:32px"><svg class="ic" width="14" height="10" viewBox="0 0 14 10" style=""><path d="M2 7.600 L7 2.800 L12 7.600" fill="none" stroke="#b4b6bc" stroke-width="2.300" stroke-linecap="round" stroke-linejoin="round"/>
</svg></div>
  <div class="pg" style="top:56px">1/1</div>
  <div style="position:absolute;left:22px;top:81px"><svg class="ic" width="14" height="10" viewBox="0 0 14 10" style=""><path d="M2 2.400 L7 7.200 L12 2.400" fill="none" stroke="#b4b6bc" stroke-width="2.300" stroke-linecap="round" stroke-linejoin="round"/>
</svg></div>
  <div style="position:absolute;left:54px;top:32px;width:254px;height:97px;background:#fff"></div>
  <div style="position:absolute;left:62px;top:11.500px"><svg class="ic" width="13" height="14" viewBox="0 0 13 14" style=""><path d="M.4 13.400 Q.6 11 3.400 10.400 Q5 10 5.100 8.800 Q3.800 7.200 4 4.800 Q4.200 1.400 6.500 1.400 Q8.800 1.400 9 4.800 Q9.200 7.200 7.900 8.800 Q8 10 9.600 10.400 Q12.400 11 12.600 13.400Z" fill="#4a4a4a"/>
</svg></div>
  <div class="t" style="left:78px;top:11px;font-size:11px;line-height:14px;color:#111;letter-spacing:.35px">admin</div>
  <div class="t" style="left:125px;top:11px;font-size:11px;line-height:14px;color:#111;letter-spacing:.35px">HTTP</div>
  <div class="t" style="left:179px;top:11px;font-size:11px;line-height:14px;color:#111;letter-spacing:.35px">00:17:19</div>
  <div style="position:absolute;left:281px;top:11px"><svg class="ic" width="18" height="14" viewBox="0 0 18 14" style=""><g transform="rotate(-40 6 8)" fill="#2a2a2a"><rect x="2.600" y="5" width="7" height="5.400" rx="1"/><rect x="9.400" y="5.600" width="2.600" height="1.200"/><rect x="9.400" y="8.600" width="2.600" height="1.200"/><rect x="-1" y="6.800" width="4" height="1.800" rx=".9"/></g>
<circle cx="13.800" cy="10" r="2.300" fill="#fde8e8" stroke="#d82a2a" stroke-width="1"/>
<path d="M12.300 8.500 L15.300 11.500" stroke="#d82a2a" stroke-width=".9"/>
</svg></div>
 </div>
 <!-- corner fold -->
 <svg class="ic" width="80" height="24" viewBox="0 0 80 24" style="position:absolute;left:269px;top:732.5px"><path d="M0 24 L14 10 Q18 4 26 4 L80 4 L80 24Z" fill="#f5f7fa" stroke="#c9cfda" stroke-width="1"/><path d="M46 9.5l5.5 5 5.5-5" fill="none" stroke="#222" stroke-width="2.4" stroke-linecap="round" stroke-linejoin="round"/></svg>
</div>

<!-- watermark -->
<div id="wm">
 <svg class="ic" width="70" height="70" viewBox="0 0 70 70" style="position:absolute;left:0;top:4px"><g transform="rotate(14 35 35)"><rect x="8" y="8" width="53" height="53" rx="5" fill="#8f9fe0" opacity=".55"/><rect x="9" y="9" width="50" height="24" rx="5" fill="#fff" opacity=".35"/><path d="M24 22 L44 46 M44 22 L24 46" stroke="#fff" stroke-width="6" stroke-linecap="round" opacity=".8"/></g></svg>
 <div class="wt">xtremehardware.com</div>
</div>

<!-- logo -->
<div id="logo"><span class="s1">Syno</span><span class="s2">logy</span><span class="s3">DSM 4.1</span></div>

</body></html>
